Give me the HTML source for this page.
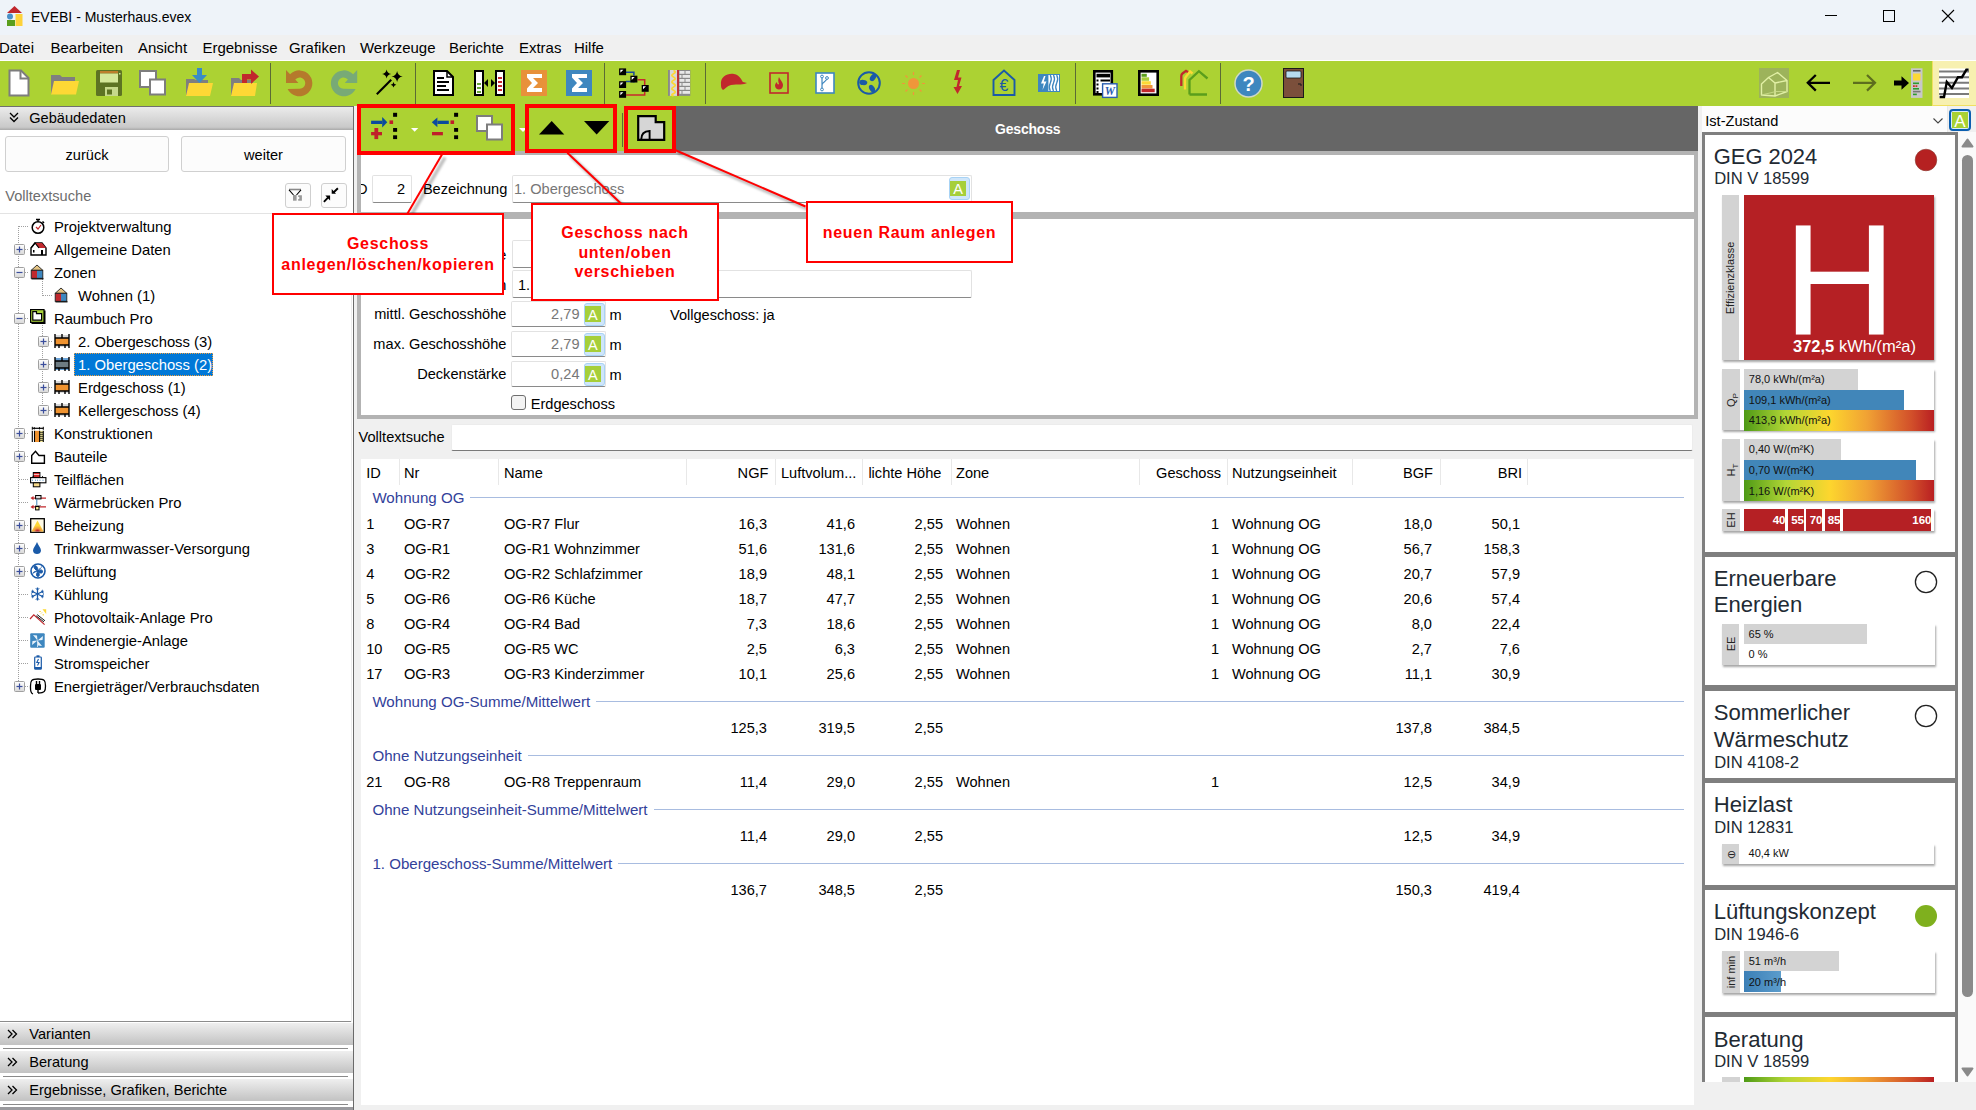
<!DOCTYPE html><html><head><meta charset="utf-8"><style>
*{box-sizing:border-box;margin:0;padding:0}
html,body{width:1976px;height:1110px;overflow:hidden;background:#f0f0f0;font-family:"Liberation Sans",sans-serif;color:#000}
.a{position:absolute}
.t{position:absolute;white-space:nowrap;font-size:14.6px;line-height:18px}
svg{position:absolute;overflow:visible}
</style></head><body><div class="a" style="left:0px;top:0px;width:1976px;height:35px;background:#eef3f9;"></div>
<svg style="left:7px;top:6px;" width="16" height="20" viewBox="0 0 16 20"><path d="M0,7 L7.5,0 L15,7 Z" fill="#c0262c"/><circle cx="3" cy="10.5" r="3" fill="#4a90c8"/><rect x="0" y="14" width="8" height="6" fill="#5a9e1c"/><rect x="8.5" y="8" width="7" height="12" fill="#fdd23a"/></svg>
<div class="t" style="left:31.02px;top:10.15px;font-size:14px;line-height:14px;color:#000;">EVEBI - Musterhaus.evex</div>
<div class="a" style="left:1825px;top:15px;width:12px;height:1px;background:#000;"></div>
<svg style="left:1883px;top:10px;" width="12" height="12" viewBox="0 0 12 12"><rect x="0.5" y="0.5" width="11" height="11" fill="none" stroke="#000" stroke-width="1"/></svg>
<svg style="left:1942px;top:10px;" width="12" height="12" viewBox="0 0 12 12"><path d="M0,0 L12,12 M12,0 L0,12" stroke="#000" stroke-width="1.1"/></svg>
<div class="a" style="left:0px;top:35px;width:1976px;height:25px;background:#f0f0f0;"></div>
<div class="a" style="left:0px;top:60px;width:1976px;height:1px;background:#ffffff;"></div>
<div class="t" style="left:-1.05px;top:40.30px;font-size:15px;line-height:15px;color:#000;">Datei</div>
<div class="t" style="left:50.45px;top:40.30px;font-size:15px;line-height:15px;color:#000;">Bearbeiten</div>
<div class="t" style="left:137.95px;top:40.30px;font-size:15px;line-height:15px;color:#000;">Ansicht</div>
<div class="t" style="left:202.45px;top:40.30px;font-size:15px;line-height:15px;color:#000;">Ergebnisse</div>
<div class="t" style="left:288.95px;top:40.30px;font-size:15px;line-height:15px;color:#000;">Grafiken</div>
<div class="t" style="left:359.95px;top:40.30px;font-size:15px;line-height:15px;color:#000;">Werkzeuge</div>
<div class="t" style="left:448.95px;top:40.30px;font-size:15px;line-height:15px;color:#000;">Berichte</div>
<div class="t" style="left:518.95px;top:40.30px;font-size:15px;line-height:15px;color:#000;">Extras</div>
<div class="t" style="left:573.95px;top:40.30px;font-size:15px;line-height:15px;color:#000;">Hilfe</div>
<div class="a" style="left:0px;top:61px;width:1976px;height:45px;background:#acd233;"></div>
<div class="a" style="left:1932px;top:61px;width:44px;height:45px;background:#f7f0b0;border-left:1px solid #f0e060;border-bottom:1px solid #f0e060;"></div>
<div class="a" style="left:270px;top:63px;width:1px;height:41px;background:#5b6b35;"></div>
<div class="a" style="left:415px;top:63px;width:1px;height:41px;background:#5b6b35;"></div>
<div class="a" style="left:604px;top:63px;width:1px;height:41px;background:#5b6b35;"></div>
<div class="a" style="left:705px;top:63px;width:1px;height:41px;background:#5b6b35;"></div>
<div class="a" style="left:1075px;top:63px;width:1px;height:41px;background:#5b6b35;"></div>
<div class="a" style="left:1220px;top:63px;width:1px;height:41px;background:#5b6b35;"></div>
<svg style="left:8px;top:69px;" width="22" height="28" viewBox="0 0 22 28"><path d="M1.5,1.5 H13 L20.5,9 V26.5 H1.5 Z" fill="#fff" stroke="#7d7d7d" stroke-width="2"/><path d="M12.5,1.5 V9.5 H20.5" fill="none" stroke="#7d7d7d" stroke-width="2"/></svg>
<svg style="left:51px;top:74px;" width="28" height="22" viewBox="0 0 28 22"><path d="M0,1 H9 L11,3 H24 V20 H0 Z" fill="#7f7f7f"/><path d="M3,7 H28 L25,20.5 H0 Z" fill="#fdd835"/></svg>
<svg style="left:96px;top:70px;" width="26" height="26" viewBox="0 0 26 26"><rect x="0" y="0" width="26" height="26" rx="1.5" fill="#5d7323"/><rect x="4" y="1" width="18" height="2.5" fill="#bd7f2c"/><rect x="4" y="3.5" width="18" height="9" fill="#d5e89a"/><rect x="9" y="17" width="13" height="9" fill="#c6d98b"/><rect x="11" y="19.5" width="5" height="5" fill="#5d7323"/><rect x="23" y="3" width="1.5" height="1.5" fill="#d5e89a"/></svg>
<svg style="left:139px;top:70px;" width="27" height="26" viewBox="0 0 27 26"><rect x="1" y="1" width="16" height="16" fill="#fff" stroke="#7d7d7d" stroke-width="2"/><rect x="11" y="9.5" width="15" height="15" fill="#fff" stroke="#7d7d7d" stroke-width="2"/></svg>
<svg style="left:186px;top:68px;" width="27" height="28" viewBox="0 0 27 28"><path d="M0,11 H8 L10,12 H22 V27 H0 Z" fill="#7f7f7f"/><path d="M3,15 H27 L24,28 H0 Z" fill="#fdd835"/><rect x="11" y="0" width="5" height="8" fill="#3a8bc6"/><path d="M6,7 H21 L13.5,15 Z" fill="#3a8bc6"/></svg>
<svg style="left:231px;top:68px;" width="29" height="28" viewBox="0 0 29 28"><path d="M0,10 H8 L10,12 H22 V27 H0 Z" fill="#7f7f7f"/><path d="M3,15 H26 L24,28 H0 Z" fill="#fdd835"/><path d="M11,6 H20 V1.5 L28,8.5 L20,16 V11.5 H16 V15 H11 Z" fill="#c1282d"/></svg>
<svg style="left:286px;top:70px;" width="27" height="27" viewBox="0 0 27 27"><path d="M1.6,19 A13,13 0 1 0 4.1,4.2 L0,0 L0,13 L12.4,13 L9.3,9.6 A5.6,5.6 0 1 1 13.1,18.7 Z" fill="#b57a2c"/></svg>
<svg style="left:331px;top:70px;" width="27" height="27" viewBox="0 0 27 27"><path d="M1.6,19 A13,13 0 1 0 4.1,4.2 L0,0 L0,13 L12.4,13 L9.3,9.6 A5.6,5.6 0 1 1 13.1,18.7 Z" fill="#78aa76" transform="translate(26.2,0) scale(-1,1)"/></svg>
<svg style="left:376px;top:69px;" width="28" height="28" viewBox="0 0 28 28"><path d="M0.8,25.3 L15.2,10.8" stroke="#000" stroke-width="2.1"/><path d="M10.6,0.40000000000000036 Q11.184999999999999,4.315 15.1,4.9 Q11.184999999999999,5.485 10.6,9.4 Q10.015,5.485 6.1,4.9 Q10.015,4.315 10.6,0.40000000000000036 Z" fill="#000"/><path d="M21.1,1.9000000000000004 Q21.828000000000003,6.772 26.700000000000003,7.5 Q21.828000000000003,8.228 21.1,13.1 Q20.372,8.228 15.500000000000002,7.5 Q20.372,6.772 21.1,1.9000000000000004 Z" fill="#000"/><path d="M17.5,12.899999999999999 Q17.864,15.335999999999999 20.3,15.7 Q17.864,16.064 17.5,18.5 Q17.136,16.064 14.7,15.7 Q17.136,15.335999999999999 17.5,12.899999999999999 Z" fill="#000"/></svg>
<svg style="left:433px;top:70px;" width="21" height="26" viewBox="0 0 21 26"><path d="M1,1 H14 L20,7 V25 H1 Z" fill="#fff" stroke="#000" stroke-width="2"/><path d="M14,1 V7 H20" fill="none" stroke="#000" stroke-width="1.5"/><path d="M4,8 H11 M4,12 H16 M4,16 H13 M4,20 H16" stroke="#000" stroke-width="2"/></svg>
<svg style="left:474px;top:70px;" width="31" height="26" viewBox="0 0 31 26"><rect x="1" y="1" width="8" height="24" fill="#fff" stroke="#000" stroke-width="2"/><path d="M3,14 h4 M3,18 h4 M3,22 h4" stroke="#6aa83a" stroke-width="2"/><rect x="22" y="1" width="8" height="24" fill="#fff" stroke="#000" stroke-width="2"/><path d="M24,8 h4 M24,12 h4 M24,16 h4 M24,20 h4" stroke="#c8282e" stroke-width="2"/><path d="M10,13 L14,9 V17 Z M21,13 L17,9 V17 Z" fill="#000"/></svg>
<svg style="left:521px;top:70px;" width="26" height="26" viewBox="0 0 26 26"><rect width="26" height="26" fill="#e8913a"/><path d="M6,4 H21 V8 H12 L17,13 L12,18 H21 V22 H6 V18.5 L11,13 L6,7.5 Z" fill="#fff"/></svg>
<svg style="left:566px;top:70px;" width="26" height="26" viewBox="0 0 26 26"><rect width="26" height="26" fill="#3e87bf"/><path d="M6,4 H21 V8 H12 L17,13 L12,18 H21 V22 H6 V18.5 L11,13 L6,7.5 Z" fill="#fff"/></svg>
<svg style="left:619px;top:68px;" width="31" height="31" viewBox="0 0 31 31"><path d="M7,4.2 H14.9 V7.6 M7,13.5 H14.9 V14.6" fill="none" stroke="#1a4aa0" stroke-width="1.5"/><path d="M18.7,11.7 H25.7 V17 M7.1,26.9 H25.7 V24" fill="none" stroke="#c8282e" stroke-width="1.5"/><rect x="0.1" y="0.4" width="7" height="6.8" fill="#000"/><path d="M1.4000000000000001,1.7000000000000002 H4.3999999999999995 L1.4000000000000001,4.7 Z" fill="#fff"/><rect x="11.4" y="7.7" width="7" height="6.8" fill="#000"/><path d="M12.700000000000001,9.0 H15.7 L12.700000000000001,12.0 Z" fill="#fff"/><rect x="0.1" y="13.2" width="7" height="6.8" fill="#000"/><path d="M1.4000000000000001,14.5 H4.3999999999999995 L1.4000000000000001,17.5 Z" fill="#fff"/><rect x="22.7" y="17" width="7" height="6.8" fill="#000"/><path d="M24.0,18.3 H27.0 L24.0,21.3 Z" fill="#fff"/><rect x="0.1" y="23" width="7" height="6.8" fill="#000"/><path d="M1.4,24.3 H4.4 L1.4,27.3 Z" fill="#fff"/></svg>
<svg style="left:668px;top:69.8px;" width="23" height="26" viewBox="0 0 23 26"><rect x="0" y="0" width="22.3" height="25.9" fill="#8a8a8a"/><rect x="1.9" y="0" width="7.4" height="25.9" fill="#d9d9d9"/><path d="M5.5,0.5 Q9,2 5.5,3.7 Q2.2,5.3 5.5,7 Q9,8.6 5.5,10.3 Q2.2,12 5.5,13.6 Q9,15.3 5.5,17 Q2.2,18.6 5.5,20.3 Q9,22 5.5,23.6 Q2.2,25 5.5,25.9" fill="none" stroke="#fdd835" stroke-width="1.8"/><rect x="9.1" y="0" width="1.8" height="25.9" fill="#c1282d"/><g fill="#e8e8e8"><rect x="11.5" y="1" width="5" height="2.8"/><rect x="17.5" y="1" width="4.5" height="2.8"/><rect x="11.5" y="5" width="2" height="2.8"/><rect x="14.5" y="5" width="7.5" height="2.8"/><rect x="11.5" y="9" width="5" height="2.8"/><rect x="17.5" y="9" width="4.5" height="2.8"/><rect x="11.5" y="13" width="2" height="2.8"/><rect x="14.5" y="13" width="7.5" height="2.8"/><rect x="11.5" y="17" width="5" height="2.8"/><rect x="17.5" y="17" width="4.5" height="2.8"/><rect x="11.5" y="21" width="2" height="2.8"/><rect x="14.5" y="21" width="7.5" height="2.8"/></g></svg>
<svg style="left:720px;top:73px;" width="27" height="18" viewBox="0 0 27 18"><path d="M1,12 C0,3 8,0 14,1 C20,2 22,8 23,9 L27,10 C24,12 18,11 11,12 C7,13 5,16 3,17 C1.5,16 1,14 1,12 Z" fill="#c1282d"/></svg>
<svg style="left:769px;top:72px;" width="20" height="22" viewBox="0 0 20 22"><rect x="1" y="1" width="18" height="20" fill="none" stroke="#c1282d" stroke-width="1.6"/><path d="M10,5 C11,8 14,10 14,13 C14,16 12,17.5 10,17.5 C8,17.5 6,16 6,13.5 C6,12 7,11 8,10 C8,12 9,13 10,12 C9,10 9,7 10,5 Z" fill="#c1282d"/></svg>
<svg style="left:815px;top:72px;" width="20" height="22" viewBox="0 0 20 22"><rect x="1" y="1" width="18" height="20" fill="#fff" stroke="#3e87bf" stroke-width="1.6"/><path d="M7,4 V18 M7,13 C7,10 12,10 12,6" fill="none" stroke="#3e87bf" stroke-width="1.2"/><circle cx="7" cy="4.5" r="1.4" fill="#fff" stroke="#3e87bf"/><circle cx="7" cy="17.5" r="1.4" fill="#fff" stroke="#3e87bf"/><circle cx="12" cy="6" r="1.4" fill="#fff" stroke="#3e87bf"/></svg>
<svg style="left:857px;top:71px;" width="24" height="24" viewBox="0 0 24 24"><circle cx="12" cy="12" r="10.8" fill="none" stroke="#1a5aa8" stroke-width="2"/><g fill="#1a5aa8"><ellipse cx="16" cy="6.5" rx="4" ry="2.6" transform="rotate(-55 16 6.5)"/><ellipse cx="6.3" cy="11.5" rx="4" ry="2.6" transform="rotate(5 6.3 11.5)"/><ellipse cx="15" cy="17.5" rx="4" ry="2.6" transform="rotate(60 15 17.5)"/></g></svg>
<svg style="left:902px;top:72px;" width="23" height="23" viewBox="0 0 23 23"><circle cx="11.5" cy="11.5" r="5.5" fill="#f0963a"/><g stroke="#f0963a" stroke-width="1.2"><path d="M11.5,0 v3 M11.5,20 v3 M0,11.5 h3 M20,11.5 h3 M3.5,3.5 l2,2 M17.5,17.5 l2,2 M3.5,19.5 l2,-2 M17.5,5.5 l2,-2"/></g></svg>
<svg style="left:951px;top:70px;" width="14" height="25" viewBox="0 0 14 25"><path d="M6,0 L3,10 L7,10 L5.5,17 L2.5,17 L6.5,24 L11,16 L8,16 L10.5,7.5 L7,7.5 L9,0 Z" fill="#c1282d"/></svg>
<svg style="left:992px;top:69px;" width="25" height="28" viewBox="0 0 25 28"><path d="M1.5,26 V11 L12,1.5 L22.5,11 V26 Z" fill="none" stroke="#1a5aa8" stroke-width="1.9"/><text x="12" y="22.3" font-size="16" font-family="Liberation Sans" fill="#1a5aa8" text-anchor="middle">€</text></svg>
<svg style="left:1038px;top:74px;" width="23" height="18" viewBox="0 0 23 18"><rect width="22" height="18" fill="#3e87bf"/><rect x="10.4" y="1" width="10.6" height="16" fill="#fff"/><path d="M6,2 L3,9.5 H5.8 L4.5,16 L8.5,7.5 H5.8 L7.5,2 Z" fill="#fff"/><path d="M12.3,1 Q14.3,5 12.3,9 Q10.3,13 12.3,17 M15.5,1 Q17.5,5 15.5,9 Q13.5,13 15.5,17 M18.7,1 Q20.7,5 18.7,9 Q16.7,13 18.7,17" fill="none" stroke="#3e87bf" stroke-width="1.3"/></svg>
<svg style="left:1093px;top:70px;" width="25" height="28" viewBox="0 0 25 28"><rect x="1.3" y="1.3" width="17.5" height="23" fill="#fff" stroke="#000" stroke-width="2.6"/><rect x="3.5" y="3.8" width="13.5" height="3.6" fill="#000"/><path d="M3.5,10.5 h2 M7.5,10.5 h9.5 M3.5,14.5 h2 M3.5,18.5 h2 M3.5,22 h2" stroke="#000" stroke-width="2"/><rect x="9.6" y="13.8" width="14.4" height="13.6" fill="#fff" stroke="#2a5db0" stroke-width="1.4"/><text x="16.8" y="25.2" font-size="11.5" font-weight="bold" font-style="italic" font-family="Liberation Serif" fill="#2a5db0" text-anchor="middle">W</text></svg>
<svg style="left:1138px;top:70px;" width="21" height="26" viewBox="0 0 21 26"><rect x="1.3" y="1.3" width="18.4" height="23.4" fill="#fff" stroke="#000" stroke-width="2.6"/><rect x="3.5" y="3.8" width="5.3" height="3" fill="#5a9e1c"/><rect x="3.5" y="7.3" width="7.6" height="3.5" fill="#a8cd3a"/><rect x="3.5" y="11.2" width="9.3" height="3.5" fill="#fdd835"/><rect x="3.5" y="15" width="11" height="3.5" fill="#f0963a"/><rect x="3.5" y="18.7" width="13.2" height="3.5" fill="#c1282d"/></svg>
<svg style="left:1180px;top:70px;" width="30" height="27" viewBox="0 0 30 27"><path d="M1.3,16 V6 Q1.3,4.5 2.5,3.5 L6,0.8 L8.5,2.5" fill="none" stroke="#c1282d" stroke-width="2.3"/><path d="M5,19.5 V9 Q5,7.5 6.2,6.5 L10,1.5 L12.5,3.5" fill="none" stroke="#fdd835" stroke-width="2.3"/><path d="M9.5,24.5 V10 L18.9,1.2 L27.5,8.5 M9.5,24.5 H27" fill="none" stroke="#5a9e1c" stroke-width="2.3"/></svg>
<svg style="left:1234px;top:69px;" width="29" height="29" viewBox="0 0 29 29"><circle cx="14.5" cy="14.5" r="13.5" fill="#3e87bf" stroke="#cfd8c8" stroke-width="1.5"/><text x="14.5" y="21.5" font-size="20" font-weight="bold" font-family="Liberation Sans" fill="#fff" text-anchor="middle">?</text></svg>
<svg style="left:1283px;top:68px;" width="21" height="30" viewBox="0 0 21 30"><rect x="0" y="0" width="21" height="30" fill="#1a1a1a"/><rect x="1" y="1" width="19" height="28" fill="#7b4f3b"/><rect x="3" y="3" width="15" height="7" rx="1" fill="#b7dcf0" stroke="#1a1a1a" stroke-width="0.8"/><path d="M15,16 h3 v2" fill="none" stroke="#1a1a1a" stroke-width="1"/></svg>
<svg style="left:1759px;top:68px;" width="30" height="30" viewBox="0 0 30 30"><rect width="30" height="30" fill="#9db35b"/><path d="M2.5,27 V16 L9.5,9.5 L16,15 V28 Z M9.5,9.5 L18.5,4.5 L28,12.5 L16,15 M28,12.5 V23.5 L16,28" fill="none" stroke="#e2f0a6" stroke-width="1.4" stroke-linejoin="round"/><path d="M2.5,27 L17,23.5 L28,23.5" fill="none" stroke="#c9dc8a" stroke-width="0.9"/></svg>
<svg style="left:1806px;top:74px;" width="25" height="18" viewBox="0 0 25 18"><path d="M24,8.8 H2 M9.8,1 L1.8,8.8 L9.8,16.6" fill="none" stroke="#000" stroke-width="2.3"/></svg>
<svg style="left:1852px;top:74px;" width="25" height="18" viewBox="0 0 25 18"><path d="M1,8.8 H23 M15,1 L23,8.8 L15,16.6" fill="none" stroke="#5d6e1e" stroke-width="2.2"/></svg>
<svg style="left:1894px;top:68px;" width="30" height="30" viewBox="0 0 30 30"><path d="M0,12.6 H7.5 V8.3 L15,15 L7.5,21.7 V17.4 H0 Z" fill="#000"/><rect x="17" y="0.3" width="11.5" height="29.6" fill="#c8c8c8"/><rect x="19" y="2" width="7.5" height="1.6" fill="#666"/><rect x="19" y="5.5" width="7.5" height="7" fill="#fdd835"/><rect x="19" y="14.5" width="6" height="1.6" fill="#2e9a2e"/><rect x="19" y="17.3" width="1.8" height="1.6" fill="#d02020"/><rect x="21.5" y="17.3" width="1.8" height="1.6" fill="#d02020"/><rect x="19" y="20" width="6" height="1.6" fill="#2e9a2e"/><rect x="19" y="22.8" width="7.5" height="1.6" fill="#777"/><rect x="19" y="25.6" width="3.8" height="1.6" fill="#2e9a2e"/></svg>
<svg style="left:1939px;top:68px;" width="31" height="30" viewBox="0 0 31 30"><rect x="0" y="0.5" width="30" height="29.5" fill="#fff"/><path d="M0,3.6 H30 M0,9.2 H30 M0,14.8 H30 M0,20.4 H30 M0,26 H30" stroke="#7a7a7a" stroke-width="2"/><path d="M0.6,29 H5 L7.8,13.9 L12.9,20 L19,9.2 H23 L27.4,1.6 H29.6" fill="none" stroke="#000" stroke-width="2.4"/></svg>
<svg width="0" height="0" style="position:absolute"><defs><linearGradient id="eg" x1="0" y1="0" x2="0" y2="1"><stop offset="0" stop-color="#fff"/><stop offset="1" stop-color="#d8d8d8"/></linearGradient></defs></svg>
<div class="a" style="left:0px;top:106px;width:354px;height:1004px;background:#fff;"></div>
<div class="a" style="left:0px;top:106px;width:353px;height:24px;background:linear-gradient(#ededed,#c9c9c9 88%,#a9a9a9);"></div>
<div class="a" style="left:0px;top:106px;width:353px;height:1px;background:#707070;"></div>
<svg style="left:9px;top:112px;" width="10" height="11" viewBox="0 0 10 11"><path d="M1,1 L5,5 L9,1 M1,5.5 L5,9.5 L9,5.5" fill="none" stroke="#000" stroke-width="1.3"/></svg>
<div class="t" style="left:29.28px;top:110.84px;font-size:14.6px;line-height:14.6px;color:#000;">Gebäudedaten</div>
<div class="a" style="left:5px;top:136px;width:164px;height:36px;background:#fcfcfc;border:1px solid #d0d0d0;border-radius:3px;"></div>
<div class="a" style="left:181px;top:136px;width:165px;height:36px;background:#fcfcfc;border:1px solid #d0d0d0;border-radius:3px;"></div>
<div class="t" style="left:7.0px;width:160px;text-align:center;top:147.64px;font-size:14.6px;line-height:14.6px;color:#000;">zurück</div>
<div class="t" style="left:183.5px;width:160px;text-align:center;top:147.64px;font-size:14.6px;line-height:14.6px;color:#000;">weiter</div>
<div class="t" style="left:5.28px;top:188.64px;font-size:14.6px;line-height:14.6px;color:#6d6d6d;">Volltextsuche</div>
<div class="a" style="left:285px;top:183px;width:25.5px;height:25px;background:#fcfcfc;border:1px solid #cfcfcf;border-radius:3px;"></div>
<div class="a" style="left:321px;top:183px;width:25.5px;height:25px;background:#fcfcfc;border:1px solid #cfcfcf;border-radius:3px;"></div>
<svg style="left:288px;top:188px;" width="15" height="14" viewBox="0 0 15 14"><path d="M1,1.5 H13" stroke="#8a8a8a" stroke-width="1.6"/><path d="M1,1.8 L5.5,7 M13,1.8 L8.5,7" stroke="#000" stroke-width="1.1"/><rect x="5" y="7" width="3.6" height="5.7" fill="#9a9a9a"/><path d="M10.2,7.3 H13.9 V12.7 H10.2 V11 H11.3 V9 H10.2 Z" fill="#9a9a9a"/></svg>
<svg style="left:323px;top:187px;" width="16" height="16" viewBox="0 0 16 16"><path d="M0.9,14.9 L5.7,9.9 M14.9,1.2 L10.5,5.5" stroke="#000" stroke-width="1.9"/><path d="M2.3,8.5 H7.1 V13.5 Z M8.7,2.1 V6.7 H13 Z" fill="#000"/></svg>
<div class="a" style="left:0px;top:213px;width:352px;height:1px;background:#e3e3e3;"></div>
<div class="a" style="left:0px;top:1021px;width:351px;height:1px;background:#8c8c8c;"></div>
<div class="a" style="left:351px;top:213px;width:1px;height:809px;background:#ececec;"></div>
<div class="a" style="left:18px;top:226px;width:1px;height:461px;background:transparent;background-image:linear-gradient(#a0a0a0 50%,transparent 50%);background-size:1px 2px;"></div>
<div class="a" style="left:42px;top:279px;width:1px;height:17px;background:transparent;background-image:linear-gradient(#a0a0a0 50%,transparent 50%);background-size:1px 2px;"></div>
<div class="a" style="left:42px;top:325px;width:1px;height:86px;background:transparent;background-image:linear-gradient(#a0a0a0 50%,transparent 50%);background-size:1px 2px;"></div>
<div class="a" style="left:19px;top:226px;width:10px;height:1px;background:transparent;background-image:linear-gradient(90deg,#a0a0a0 50%,transparent 50%);background-size:2px 1px;"></div>
<svg style="left:30px;top:218px;" width="16" height="16" viewBox="0 0 16 16"><circle cx="8" cy="9.5" r="5.8" fill="#fff" stroke="#000" stroke-width="1.5"/><path d="M6,1.5 H10 M8,1.5 V3.5 M12.5,3.5 L14,5" stroke="#000" stroke-width="1.5"/><path d="M6,9 L8,11 L11,7" fill="none" stroke="#c1282d" stroke-width="1.2"/></svg>
<div class="t" style="left:53.96px;top:219.97px;font-size:14.8px;line-height:14.8px;color:#000;">Projektverwaltung</div>
<div class="a" style="left:19px;top:249px;width:10px;height:1px;background:transparent;background-image:linear-gradient(90deg,#a0a0a0 50%,transparent 50%);background-size:2px 1px;"></div>
<svg style="left:14px;top:243.5px;" width="11" height="11" viewBox="0 0 11 11"><rect x="0.5" y="0.5" width="10" height="10" rx="1" fill="url(#eg)" stroke="#a0a0a0"/><path d="M2.5,5.5 H8.5" stroke="#3b4e9c" stroke-width="1.2"/><path d="M5.5,2.5 V8.5" stroke="#3b4e9c" stroke-width="1.2"/></svg>
<svg style="left:30px;top:241px;" width="17" height="15" viewBox="0 0 17 15"><path d="M1,14 V7 L5,2 H12 L16,7 V14 Z" fill="#fff" stroke="#000" stroke-width="1.4"/><path d="M5,2 H12 L16,7 H9 Z" fill="#c1282d"/><path d="M1,7 L5,2 L9,7" fill="none" stroke="#000" stroke-width="1.2"/><rect x="3" y="9" width="1.5" height="2.5" fill="#000"/><rect x="11" y="9" width="2" height="5" fill="#000"/></svg>
<div class="t" style="left:53.96px;top:242.97px;font-size:14.8px;line-height:14.8px;color:#000;">Allgemeine Daten</div>
<div class="a" style="left:19px;top:272px;width:10px;height:1px;background:transparent;background-image:linear-gradient(90deg,#a0a0a0 50%,transparent 50%);background-size:2px 1px;"></div>
<svg style="left:14px;top:266.5px;" width="11" height="11" viewBox="0 0 11 11"><rect x="0.5" y="0.5" width="10" height="10" rx="1" fill="url(#eg)" stroke="#a0a0a0"/><path d="M2.5,5.5 H8.5" stroke="#3b4e9c" stroke-width="1.2"/></svg>
<svg style="left:30px;top:264px;" width="15" height="16" viewBox="0 0 15 16"><path d="M1.2,6.3 L7,1 L12.8,6.3 Z" fill="#e3c383" stroke="#222" stroke-width="0.9" stroke-linejoin="round"/><rect x="1.2" y="6.3" width="5.8" height="8" fill="#c1282d"/><rect x="7" y="6.3" width="5.8" height="8" fill="#3e87bf"/><rect x="1.2" y="6.3" width="11.6" height="8" fill="none" stroke="#222" stroke-width="0.9"/><path d="M1.5,14.8 H13.5" stroke="#111" stroke-width="1.3"/></svg>
<div class="t" style="left:53.96px;top:265.97px;font-size:14.8px;line-height:14.8px;color:#000;">Zonen</div>
<div class="a" style="left:43px;top:295px;width:10px;height:1px;background:transparent;background-image:linear-gradient(90deg,#a0a0a0 50%,transparent 50%);background-size:2px 1px;"></div>
<svg style="left:54px;top:287px;" width="15" height="16" viewBox="0 0 15 16"><path d="M1.2,6.3 L7,1 L12.8,6.3 Z" fill="#e3c383" stroke="#222" stroke-width="0.9" stroke-linejoin="round"/><rect x="1.2" y="6.3" width="5.8" height="8" fill="#c1282d"/><rect x="7" y="6.3" width="5.8" height="8" fill="#3e87bf"/><rect x="1.2" y="6.3" width="11.6" height="8" fill="none" stroke="#222" stroke-width="0.9"/><path d="M1.5,14.8 H13.5" stroke="#111" stroke-width="1.3"/></svg>
<div class="t" style="left:78.06px;top:288.97px;font-size:14.8px;line-height:14.8px;color:#000;">Wohnen (1)</div>
<div class="a" style="left:19px;top:318px;width:10px;height:1px;background:transparent;background-image:linear-gradient(90deg,#a0a0a0 50%,transparent 50%);background-size:2px 1px;"></div>
<svg style="left:14px;top:312.5px;" width="11" height="11" viewBox="0 0 11 11"><rect x="0.5" y="0.5" width="10" height="10" rx="1" fill="url(#eg)" stroke="#a0a0a0"/><path d="M2.5,5.5 H8.5" stroke="#3b4e9c" stroke-width="1.2"/></svg>
<svg style="left:30px;top:309px;" width="16" height="16" viewBox="0 0 16 16"><rect x="1.5" y="1.5" width="14" height="13.5" fill="#000"/><rect x="0.6" y="0.6" width="13.4" height="12.8" fill="#a8d13a" stroke="#000" stroke-width="1.2"/><path d="M2.8,2.6 H6.5 V4.6 H11.6 V11.2 H2.8 Z" fill="#fff" stroke="#000" stroke-width="1.2"/></svg>
<div class="t" style="left:53.96px;top:311.97px;font-size:14.8px;line-height:14.8px;color:#000;">Raumbuch Pro</div>
<div class="a" style="left:43px;top:341px;width:10px;height:1px;background:transparent;background-image:linear-gradient(90deg,#a0a0a0 50%,transparent 50%);background-size:2px 1px;"></div>
<svg style="left:38px;top:335.5px;" width="11" height="11" viewBox="0 0 11 11"><rect x="0.5" y="0.5" width="10" height="10" rx="1" fill="url(#eg)" stroke="#a0a0a0"/><path d="M2.5,5.5 H8.5" stroke="#3b4e9c" stroke-width="1.2"/><path d="M5.5,2.5 V8.5" stroke="#3b4e9c" stroke-width="1.2"/></svg>
<svg style="left:54px;top:334px;" width="16" height="15" viewBox="0 0 16 15"><rect x="1" y="1" width="14" height="12" fill="#d9d9d9"/><rect x="1" y="4" width="14" height="7" fill="#ef9330"/><path d="M1,0 V14 M15,0 V14 M8,0 V4 M1,4 H15 M1,11 H15 M5,11 V14 M11,11 V14" stroke="#000" stroke-width="1.4"/></svg>
<div class="t" style="left:78.06px;top:334.97px;font-size:14.8px;line-height:14.8px;color:#000;">2. Obergeschoss (3)</div>
<div class="a" style="left:43px;top:364px;width:10px;height:1px;background:transparent;background-image:linear-gradient(90deg,#a0a0a0 50%,transparent 50%);background-size:2px 1px;"></div>
<svg style="left:38px;top:358.5px;" width="11" height="11" viewBox="0 0 11 11"><rect x="0.5" y="0.5" width="10" height="10" rx="1" fill="url(#eg)" stroke="#a0a0a0"/><path d="M2.5,5.5 H8.5" stroke="#3b4e9c" stroke-width="1.2"/><path d="M5.5,2.5 V8.5" stroke="#3b4e9c" stroke-width="1.2"/></svg>
<svg style="left:54px;top:357px;" width="16" height="15" viewBox="0 0 16 15"><rect x="1" y="1" width="14" height="12" fill="#6aa3d8"/><rect x="1" y="4" width="14" height="7" fill="#6d7b82"/><path d="M1,0 V14 M15,0 V14 M8,0 V4 M1,4 H15 M1,11 H15 M5,11 V14 M11,11 V14" stroke="#000" stroke-width="1.4"/></svg>
<div class="a" style="left:73.5px;top:353px;width:139px;height:23px;background:#0078d7;outline:1px dotted #f0a040;outline-offset:-1px;"></div>
<div class="t" style="left:78.06px;top:357.97px;font-size:14.8px;line-height:14.8px;color:#fff;">1. Obergeschoss (2)</div>
<div class="a" style="left:43px;top:387px;width:10px;height:1px;background:transparent;background-image:linear-gradient(90deg,#a0a0a0 50%,transparent 50%);background-size:2px 1px;"></div>
<svg style="left:38px;top:381.5px;" width="11" height="11" viewBox="0 0 11 11"><rect x="0.5" y="0.5" width="10" height="10" rx="1" fill="url(#eg)" stroke="#a0a0a0"/><path d="M2.5,5.5 H8.5" stroke="#3b4e9c" stroke-width="1.2"/><path d="M5.5,2.5 V8.5" stroke="#3b4e9c" stroke-width="1.2"/></svg>
<svg style="left:54px;top:380px;" width="16" height="15" viewBox="0 0 16 15"><rect x="1" y="1" width="14" height="12" fill="#d9d9d9"/><rect x="1" y="4" width="14" height="7" fill="#ef9330"/><path d="M1,0 V14 M15,0 V14 M8,0 V4 M1,4 H15 M1,11 H15 M5,11 V14 M11,11 V14" stroke="#000" stroke-width="1.4"/></svg>
<div class="t" style="left:78.06px;top:380.97px;font-size:14.8px;line-height:14.8px;color:#000;">Erdgeschoss (1)</div>
<div class="a" style="left:43px;top:410px;width:10px;height:1px;background:transparent;background-image:linear-gradient(90deg,#a0a0a0 50%,transparent 50%);background-size:2px 1px;"></div>
<svg style="left:38px;top:404.5px;" width="11" height="11" viewBox="0 0 11 11"><rect x="0.5" y="0.5" width="10" height="10" rx="1" fill="url(#eg)" stroke="#a0a0a0"/><path d="M2.5,5.5 H8.5" stroke="#3b4e9c" stroke-width="1.2"/><path d="M5.5,2.5 V8.5" stroke="#3b4e9c" stroke-width="1.2"/></svg>
<svg style="left:54px;top:403px;" width="16" height="15" viewBox="0 0 16 15"><rect x="1" y="1" width="14" height="12" fill="#d9d9d9"/><rect x="1" y="4" width="14" height="7" fill="#ef9330"/><path d="M1,0 V14 M15,0 V14 M8,0 V4 M1,4 H15 M1,11 H15 M5,11 V14 M11,11 V14" stroke="#000" stroke-width="1.4"/></svg>
<div class="t" style="left:78.06px;top:403.97px;font-size:14.8px;line-height:14.8px;color:#000;">Kellergeschoss (4)</div>
<div class="a" style="left:19px;top:433px;width:10px;height:1px;background:transparent;background-image:linear-gradient(90deg,#a0a0a0 50%,transparent 50%);background-size:2px 1px;"></div>
<svg style="left:14px;top:427.5px;" width="11" height="11" viewBox="0 0 11 11"><rect x="0.5" y="0.5" width="10" height="10" rx="1" fill="url(#eg)" stroke="#a0a0a0"/><path d="M2.5,5.5 H8.5" stroke="#3b4e9c" stroke-width="1.2"/><path d="M5.5,2.5 V8.5" stroke="#3b4e9c" stroke-width="1.2"/></svg>
<svg style="left:30px;top:426px;" width="16" height="17" viewBox="0 0 16 17"><path d="M2.3,2.3 H13.3" stroke="#000" stroke-width="1.2"/><path d="M2.3,0.8 V3.8 M4.3,1.2 V3.4 M9.5,1.2 V3.4 M13.3,0.8 V3.8" stroke="#000" stroke-width="1"/><rect x="5" y="4.8" width="4.3" height="11.2" fill="#ef9330"/><rect x="10" y="4.8" width="3.3" height="11.2" fill="#fff3a0"/><path d="M2.3,4.8 V16 M4.5,4.8 V16 M9.6,4.8 V16 M13.3,4.8 V16" stroke="#000" stroke-width="1.1"/><path d="M10,6.3 H13 M10,8.3 H13 M10,10.3 H13 M10,12.3 H13 M10,14.3 H13" stroke="#000" stroke-width="0.8"/></svg>
<div class="t" style="left:53.96px;top:426.97px;font-size:14.8px;line-height:14.8px;color:#000;">Konstruktionen</div>
<div class="a" style="left:19px;top:456px;width:10px;height:1px;background:transparent;background-image:linear-gradient(90deg,#a0a0a0 50%,transparent 50%);background-size:2px 1px;"></div>
<svg style="left:14px;top:450.5px;" width="11" height="11" viewBox="0 0 11 11"><rect x="0.5" y="0.5" width="10" height="10" rx="1" fill="url(#eg)" stroke="#a0a0a0"/><path d="M2.5,5.5 H8.5" stroke="#3b4e9c" stroke-width="1.2"/><path d="M5.5,2.5 V8.5" stroke="#3b4e9c" stroke-width="1.2"/></svg>
<svg style="left:30px;top:448px;" width="16" height="17" viewBox="0 0 16 17"><path d="M1.7,7.5 L5.5,3.3 L9,7.5 H14.4 V15.3 H1.7 Z" fill="#fff" stroke="#000" stroke-width="1.4" stroke-linejoin="miter"/></svg>
<div class="t" style="left:53.96px;top:449.97px;font-size:14.8px;line-height:14.8px;color:#000;">Bauteile</div>
<div class="a" style="left:19px;top:479px;width:10px;height:1px;background:transparent;background-image:linear-gradient(90deg,#a0a0a0 50%,transparent 50%);background-size:2px 1px;"></div>
<svg style="left:30px;top:471.5px;" width="17" height="16" viewBox="0 0 17 16"><rect x="3.3" y="0.5" width="6.6" height="5.5" fill="#d42a2a" stroke="#000" stroke-width="1"/><path d="M3.8,2.5 H9.4" stroke="#fff" stroke-width="0.7"/><rect x="0.6" y="5.6" width="15.3" height="5.2" fill="#fff" stroke="#000" stroke-width="1.1"/><path d="M2,8.2 h1 M5,8.2 h1 M7,8.2 h1 M9.5,8.2 h1 M12.5,8.2 h1" stroke="#3e87bf" stroke-width="1"/><path d="M2,5.6 L3,3.8 L4,5.6 M11.5,5.6 L12.5,3.8 L13.5,5.6" fill="#000"/><rect x="3.3" y="10.8" width="6.6" height="4" fill="#f5d98a" stroke="#000" stroke-width="1"/></svg>
<div class="t" style="left:53.96px;top:472.97px;font-size:14.8px;line-height:14.8px;color:#000;">Teilflächen</div>
<div class="a" style="left:19px;top:502px;width:10px;height:1px;background:transparent;background-image:linear-gradient(90deg,#a0a0a0 50%,transparent 50%);background-size:2px 1px;"></div>
<svg style="left:30px;top:494.5px;" width="17" height="17" viewBox="0 0 17 17"><path d="M3,3.1 H16 M3,11.9 H16" stroke="#c1282d" stroke-width="1.2"/><path d="M0.5,3.1 L3.5,1 V5.2 Z M0.5,11.9 L3.5,9.8 V14 Z" fill="#c1282d"/><rect x="5.6" y="0.5" width="5.4" height="3.4" fill="#ddd" stroke="#000" stroke-width="1"/><path d="M6.8,3.9 V10.5" stroke="#3e87bf" stroke-width="1"/><path d="M5,10.5 H11" stroke="#888" stroke-width="0.8"/><rect x="5.6" y="11.5" width="3.4" height="3.4" fill="#fff3a0" stroke="#000" stroke-width="1"/></svg>
<div class="t" style="left:53.96px;top:495.97px;font-size:14.8px;line-height:14.8px;color:#000;">Wärmebrücken Pro</div>
<div class="a" style="left:19px;top:525px;width:10px;height:1px;background:transparent;background-image:linear-gradient(90deg,#a0a0a0 50%,transparent 50%);background-size:2px 1px;"></div>
<svg style="left:14px;top:519.5px;" width="11" height="11" viewBox="0 0 11 11"><rect x="0.5" y="0.5" width="10" height="10" rx="1" fill="url(#eg)" stroke="#a0a0a0"/><path d="M2.5,5.5 H8.5" stroke="#3b4e9c" stroke-width="1.2"/><path d="M5.5,2.5 V8.5" stroke="#3b4e9c" stroke-width="1.2"/></svg>
<svg style="left:30px;top:518px;" width="15" height="15" viewBox="0 0 15 15"><defs><radialGradient id="hz" cx="0.5" cy="1" r="0.9"><stop offset="0.1" stop-color="#c1282d"/><stop offset="0.3" stop-color="#f0963a"/><stop offset="0.6" stop-color="#fdd835"/><stop offset="1" stop-color="#fdd835"/></radialGradient></defs><rect x="0.7" y="0.7" width="13.6" height="13.6" fill="#fffbe6" stroke="#000" stroke-width="1.3"/><path d="M1.5,13.5 L7.5,2.5 L13.5,13.5 Z" fill="url(#hz)"/></svg>
<div class="t" style="left:53.96px;top:518.97px;font-size:14.8px;line-height:14.8px;color:#000;">Beheizung</div>
<div class="a" style="left:19px;top:548px;width:10px;height:1px;background:transparent;background-image:linear-gradient(90deg,#a0a0a0 50%,transparent 50%);background-size:2px 1px;"></div>
<svg style="left:14px;top:542.5px;" width="11" height="11" viewBox="0 0 11 11"><rect x="0.5" y="0.5" width="10" height="10" rx="1" fill="url(#eg)" stroke="#a0a0a0"/><path d="M2.5,5.5 H8.5" stroke="#3b4e9c" stroke-width="1.2"/><path d="M5.5,2.5 V8.5" stroke="#3b4e9c" stroke-width="1.2"/></svg>
<svg style="left:33px;top:542px;" width="8" height="12" viewBox="0 0 8 12"><path d="M4,0 C5,3 8,6 8,8.5 C8,11 6,12 4,12 C2,12 0,11 0,8.5 C0,6 3,3 4,0 Z" fill="#1a5aa8"/></svg>
<div class="t" style="left:53.96px;top:541.97px;font-size:14.8px;line-height:14.8px;color:#000;">Trinkwarmwasser-Versorgung</div>
<div class="a" style="left:19px;top:571px;width:10px;height:1px;background:transparent;background-image:linear-gradient(90deg,#a0a0a0 50%,transparent 50%);background-size:2px 1px;"></div>
<svg style="left:14px;top:565.5px;" width="11" height="11" viewBox="0 0 11 11"><rect x="0.5" y="0.5" width="10" height="10" rx="1" fill="url(#eg)" stroke="#a0a0a0"/><path d="M2.5,5.5 H8.5" stroke="#3b4e9c" stroke-width="1.2"/><path d="M5.5,2.5 V8.5" stroke="#3b4e9c" stroke-width="1.2"/></svg>
<svg style="left:30px;top:563px;" width="16" height="16" viewBox="0 0 16 16"><circle cx="8" cy="8" r="7" fill="none" stroke="#1a5aa8" stroke-width="1.6"/><path d="M8,8 C8,4 6,2 4.5,3 C3,4 5,7 8,8 Z M8,8 C11,6 13,7 12.5,9 C12,11 9,10 8,8 Z M8,8 C6,11 6,13.5 8,13.5 C10,13.5 9.5,10 8,8 Z M8,8 C5,8 3,9 3,10.5 M8,8 C10,5 12,4 12,3.5" fill="#1a5aa8" stroke="#1a5aa8" stroke-width="1"/></svg>
<div class="t" style="left:53.96px;top:564.97px;font-size:14.8px;line-height:14.8px;color:#000;">Belüftung</div>
<div class="a" style="left:19px;top:594px;width:10px;height:1px;background:transparent;background-image:linear-gradient(90deg,#a0a0a0 50%,transparent 50%);background-size:2px 1px;"></div>
<svg style="left:30px;top:587px;" width="16" height="15" viewBox="0 0 16 15"><g stroke="#1a5aa8" stroke-width="1.3" fill="none"><path d="M7.5,0.5 V13.5 M1.5,4 L13.5,10 M1.5,10 L13.5,4"/><path d="M5.8,1.2 L7.5,3 L9.2,1.2 M5.8,12.8 L7.5,11 L9.2,12.8 M1,6.3 L3.3,5.2 L2.6,2.8 M14,6.3 L11.7,5.2 L12.4,2.8 M1,7.7 L3.3,8.8 L2.6,11.2 M14,7.7 L11.7,8.8 L12.4,11.2" stroke-width="1"/></g></svg>
<div class="t" style="left:53.96px;top:587.97px;font-size:14.8px;line-height:14.8px;color:#000;">Kühlung</div>
<div class="a" style="left:19px;top:617px;width:10px;height:1px;background:transparent;background-image:linear-gradient(90deg,#a0a0a0 50%,transparent 50%);background-size:2px 1px;"></div>
<svg style="left:30px;top:609px;" width="17" height="17" viewBox="0 0 17 17"><path d="M0,10 L3.8,5.8 L14.6,15.6" fill="none" stroke="#c1282d" stroke-width="1.2"/><path d="M6.2,6.8 L14,13 M7.2,5.6 L15,11.8" stroke="#000" stroke-width="0.9"/><path d="M12.5,0.2 H16.2 V5 Z" fill="#fdd835"/><path d="M9.3,2.5 h1.5 M11,4.5 l1,-1 M13.2,6.5 v-1.5" stroke="#fdd835" stroke-width="1"/></svg>
<div class="t" style="left:53.96px;top:610.97px;font-size:14.8px;line-height:14.8px;color:#000;">Photovoltaik-Anlage Pro</div>
<div class="a" style="left:19px;top:640px;width:10px;height:1px;background:transparent;background-image:linear-gradient(90deg,#a0a0a0 50%,transparent 50%);background-size:2px 1px;"></div>
<svg style="left:30px;top:632.5px;" width="16" height="16" viewBox="0 0 16 16"><rect x="0.2" y="0.2" width="14.5" height="14.5" rx="1" fill="#3e87bf"/><g fill="#e8f2fa"><path d="M7.5,7.5 L3,2 L7,2.5 Z M7.5,7.5 L13,3 L12.5,7 Z M7.5,7.5 L12,13 L8,12.5 Z M7.5,7.5 L2,12 L2.5,8 Z"/></g><path d="M7.5,7.5 V14" stroke="#e8f2fa" stroke-width="0.8"/></svg>
<div class="t" style="left:53.96px;top:633.97px;font-size:14.8px;line-height:14.8px;color:#000;">Windenergie-Anlage</div>
<div class="a" style="left:19px;top:663px;width:10px;height:1px;background:transparent;background-image:linear-gradient(90deg,#a0a0a0 50%,transparent 50%);background-size:2px 1px;"></div>
<svg style="left:34px;top:655px;" width="8" height="16" viewBox="0 0 8 16"><rect x="0.7" y="2" width="6.6" height="12" rx="0.8" fill="#fff" stroke="#1a5aa8" stroke-width="1.2"/><rect x="2.5" y="0.3" width="3" height="1.8" fill="#1a5aa8"/><rect x="0.5" y="12" width="7" height="2.5" fill="#1a5aa8"/><path d="M4.5,4 L2.8,7.5 H5 L3.5,10.5" fill="none" stroke="#1a5aa8" stroke-width="1.1"/></svg>
<div class="t" style="left:53.96px;top:656.97px;font-size:14.8px;line-height:14.8px;color:#000;">Stromspeicher</div>
<div class="a" style="left:19px;top:686px;width:10px;height:1px;background:transparent;background-image:linear-gradient(90deg,#a0a0a0 50%,transparent 50%);background-size:2px 1px;"></div>
<svg style="left:14px;top:680.5px;" width="11" height="11" viewBox="0 0 11 11"><rect x="0.5" y="0.5" width="10" height="10" rx="1" fill="url(#eg)" stroke="#a0a0a0"/><path d="M2.5,5.5 H8.5" stroke="#3b4e9c" stroke-width="1.2"/><path d="M5.5,2.5 V8.5" stroke="#3b4e9c" stroke-width="1.2"/></svg>
<svg style="left:30px;top:678px;" width="16" height="16" viewBox="0 0 16 16"><path d="M3,16 C0,15 0.5,12 0.5,8 C0.5,3 1,1 8,1 C15,1 15.5,3 15.5,8 C15.5,13 15,15 8,15" fill="none" stroke="#000" stroke-width="1.3"/><rect x="5" y="6" width="6" height="6" rx="1" fill="#000"/><path d="M6.5,3 V6 M9.5,3 V6 M8,12 V15" stroke="#000" stroke-width="1.4"/></svg>
<div class="t" style="left:53.96px;top:679.97px;font-size:14.8px;line-height:14.8px;color:#000;">Energieträger/Verbrauchsdaten</div>
<div class="a" style="left:0px;top:1023px;width:353px;height:22px;background:linear-gradient(#efefef,#c2c2c2);"></div>
<div class="a" style="left:3px;top:1048px;width:345px;height:1px;background:#8a8a8a;"></div>
<svg style="left:7px;top:1029px;" width="11" height="10" viewBox="0 0 11 10"><path d="M1,1 L5,5 L1,9 M5.5,1 L9.5,5 L5.5,9" fill="none" stroke="#000" stroke-width="1.3"/></svg>
<div class="t" style="left:29.28px;top:1027.14px;font-size:14.6px;line-height:14.6px;color:#000;">Varianten</div>
<div class="a" style="left:0px;top:1051px;width:353px;height:22px;background:linear-gradient(#efefef,#c2c2c2);"></div>
<div class="a" style="left:3px;top:1076px;width:345px;height:1px;background:#8a8a8a;"></div>
<svg style="left:7px;top:1057px;" width="11" height="10" viewBox="0 0 11 10"><path d="M1,1 L5,5 L1,9 M5.5,1 L9.5,5 L5.5,9" fill="none" stroke="#000" stroke-width="1.3"/></svg>
<div class="t" style="left:29.28px;top:1055.14px;font-size:14.6px;line-height:14.6px;color:#000;">Beratung</div>
<div class="a" style="left:0px;top:1079px;width:353px;height:22px;background:linear-gradient(#efefef,#c2c2c2);"></div>
<div class="a" style="left:3px;top:1104px;width:345px;height:1px;background:#8a8a8a;"></div>
<svg style="left:7px;top:1085px;" width="11" height="10" viewBox="0 0 11 10"><path d="M1,1 L5,5 L1,9 M5.5,1 L9.5,5 L5.5,9" fill="none" stroke="#000" stroke-width="1.3"/></svg>
<div class="t" style="left:29.28px;top:1083.14px;font-size:14.6px;line-height:14.6px;color:#000;">Ergebnisse, Grafiken, Berichte</div>
<div class="a" style="left:0px;top:1107px;width:353px;height:3px;background:#9a9a9e;"></div>
<div class="a" style="left:353px;top:106px;width:1px;height:1004px;background:#6a6a6a;"></div>
<div class="a" style="left:357px;top:106px;width:319px;height:45px;background:#acd233;"></div>
<div class="a" style="left:676px;top:106px;width:1022px;height:45px;background:#666666;"></div>
<div class="a" style="left:622px;top:113px;width:1px;height:34px;background:#5b6b35;"></div>
<div class="t" style="left:927.7px;width:200px;text-align:center;top:122.15px;font-size:14px;line-height:14px;color:#fff;font-weight:bold;letter-spacing:-0.2px;">Geschoss</div>
<svg style="left:370px;top:112px;" width="30" height="28" viewBox="0 0 30 28"><rect x="1.1" y="8.7" width="11.1" height="3.3" fill="#0b4a9e"/><path d="M12.2,4.9 L17.3,10.35 L12.2,15.5 Z" fill="#0b4a9e"/><rect x="1.1" y="20" width="10.9" height="3.3" fill="#c0202a"/><rect x="4.4" y="16" width="3.8" height="11.1" fill="#c0202a"/><rect x="19.5" y="8.4" width="3.6" height="3.6" fill="#c0202a"/><rect x="23.1" y="0.8" width="4" height="4" fill="#000"/><rect x="23.1" y="16" width="4" height="3.8" fill="#000"/><rect x="23.1" y="23.3" width="4" height="3.8" fill="#000"/></svg>
<svg style="left:410.8px;top:128px;" width="7.3" height="3.8" viewBox="0 0 7.3 3.8"><path d="M0,0 H7.3 L3.65,3.8 Z" fill="#fff"/></svg>
<svg style="left:431px;top:112px;" width="30" height="28" viewBox="0 0 30 28"><path d="M0.8,10.35 L6.4,5.4 V15.2 Z" fill="#0b4a9e"/><rect x="6.4" y="8.7" width="11.4" height="3.3" fill="#0b4a9e"/><rect x="1" y="20" width="10.9" height="3.3" fill="#c0202a"/><rect x="19.5" y="8.4" width="3.6" height="3.6" fill="#c0202a"/><rect x="23.1" y="0.8" width="4" height="4" fill="#000"/><rect x="23.1" y="16" width="4" height="3.8" fill="#000"/><rect x="23.1" y="23.3" width="4" height="3.8" fill="#000"/></svg>
<svg style="left:476px;top:114.8px;" width="27" height="26" viewBox="0 0 27 26"><rect x="1" y="1" width="15" height="15" fill="#fff" stroke="#7d7d7d" stroke-width="2"/><rect x="11" y="9.5" width="15" height="15" fill="#fff" stroke="#7d7d7d" stroke-width="2"/></svg>
<svg style="left:519px;top:128px;" width="8" height="4" viewBox="0 0 8 4"><path d="M0,0 H8 L4,4 Z" fill="#fff"/></svg>
<svg style="left:539px;top:121px;" width="26" height="14" viewBox="0 0 26 14"><path d="M0,13.5 L12.7,0 L25.3,13.5 Z" fill="#000"/></svg>
<svg style="left:584px;top:121px;" width="26" height="14" viewBox="0 0 26 14"><path d="M0,0 L12.7,13.5 L25.3,0 Z" fill="#000"/></svg>
<svg style="left:636px;top:114px;" width="30" height="28" viewBox="0 0 30 28"><path d="M2.2,2.2 H19.7 V8.1 H28.2 V25.9 H2.2 Z" fill="#d6d6d6" stroke="#000" stroke-width="2.2"/><path d="M5.2,25.5 C5.2,20.5 8,17.2 13.6,17 V25.5" fill="none" stroke="#000" stroke-width="1.9"/></svg>
<div class="a" style="left:357px;top:151px;width:341px;height:4px;background:#b3b3b3;"></div>
<div class="a" style="left:676px;top:151px;width:1022px;height:4px;background:#b3b3b3;"></div>
<div class="a" style="left:357px;top:155px;width:4px;height:264px;background:#b3b3b3;"></div>
<div class="a" style="left:1694px;top:155px;width:4px;height:264px;background:#b3b3b3;"></div>
<div class="a" style="left:361px;top:155px;width:1333px;height:57px;background:#fff;"></div>
<div class="a" style="left:361px;top:212px;width:1333px;height:7px;background:#b3b3b3;"></div>
<div class="a" style="left:361px;top:219px;width:1333px;height:196px;background:#fff;"></div>
<div class="a" style="left:361px;top:415px;width:1333px;height:4px;background:#b3b3b3;"></div>
<div class="a" style="left:361px;top:155px;width:20px;height:57px;overflow:hidden"><div class="t" style="left:-8.02px;top:27.04px;font-size:14.6px;line-height:14.6px;color:#000;">ID</div></div>
<div class="a" style="left:371.5px;top:175px;width:40px;height:28px;background:#fff;border:1px solid #e2e2e2;border-bottom:1px solid #8a8a8a;border-radius:2px;"></div>
<div class="t" style="right:1571px;top:182.04px;font-size:14.6px;line-height:14.6px;color:#000;">2</div>
<div class="t" style="left:422.88px;top:182.04px;font-size:14.6px;line-height:14.6px;color:#000;">Bezeichnung</div>
<div class="a" style="left:511.5px;top:175px;width:460px;height:28px;background:#fff;border:1px solid #e2e2e2;border-bottom:1px solid #8a8a8a;border-radius:2px;"></div>
<div class="t" style="left:513.98px;top:182.04px;font-size:14.6px;line-height:14.6px;color:#777;">1. Obergeschoss</div>
<div class="a" style="left:949px;top:177px;width:21px;height:23.2px;background:#cfe6fa;border:1px solid #a8d3f5;border-radius:3px;"></div><div class="a" style="left:950.2px;top:180.6px;width:15.8px;height:15.2px;background:#a6cf3a;"></div><div class="t" style="left:948.1px;width:20px;text-align:center;top:181.73px;font-size:14.5px;line-height:14.5px;color:#fff;">A</div>
<div class="t" style="right:1469.6px;top:247.74px;font-size:14.6px;line-height:14.6px;color:#000;">Geschosstyp e</div>
<div class="t" style="right:1469.6px;top:277.74px;font-size:14.6px;line-height:14.6px;color:#000;">Raumbuch</div>
<div class="a" style="left:511.5px;top:240px;width:95px;height:28px;background:#fff;border:1px solid #e2e2e2;border-bottom:1px solid #8a8a8a;border-radius:2px;"></div>
<div class="a" style="left:511.5px;top:270px;width:460px;height:28px;background:#fff;border:1px solid #e2e2e2;border-bottom:1px solid #8a8a8a;border-radius:2px;"></div>
<div class="t" style="left:517.98px;top:277.74px;font-size:14.6px;line-height:14.6px;color:#000;">1.</div>
<div class="t" style="right:1469.6px;top:306.94px;font-size:14.6px;line-height:14.6px;color:#000;">mittl. Geschosshöhe</div>
<div class="a" style="left:511px;top:300.8px;width:95px;height:26.6px;background:#fff;border:1px solid #e2e2e2;border-bottom:1px solid #8a8a8a;border-radius:2px;"></div>
<div class="t" style="right:1396.5px;top:306.94px;font-size:14.6px;line-height:14.6px;color:#777;">2,79</div>
<div class="a" style="left:583.8px;top:302.8px;width:21px;height:23.2px;background:#cfe6fa;border:1px solid #a8d3f5;border-radius:3px;"></div><div class="a" style="left:585.0px;top:306.40000000000003px;width:15.8px;height:15.2px;background:#a6cf3a;"></div><div class="t" style="left:582.9px;width:20px;text-align:center;top:307.53px;font-size:14.5px;line-height:14.5px;color:#fff;">A</div>
<div class="t" style="left:609.48px;top:307.94px;font-size:14.6px;line-height:14.6px;color:#000;">m</div>
<div class="t" style="right:1469.6px;top:336.94px;font-size:14.6px;line-height:14.6px;color:#000;">max. Geschosshöhe</div>
<div class="a" style="left:511px;top:330.8px;width:95px;height:26.6px;background:#fff;border:1px solid #e2e2e2;border-bottom:1px solid #8a8a8a;border-radius:2px;"></div>
<div class="t" style="right:1396.5px;top:336.94px;font-size:14.6px;line-height:14.6px;color:#777;">2,79</div>
<div class="a" style="left:583.8px;top:332.8px;width:21px;height:23.2px;background:#cfe6fa;border:1px solid #a8d3f5;border-radius:3px;"></div><div class="a" style="left:585.0px;top:336.40000000000003px;width:15.8px;height:15.2px;background:#a6cf3a;"></div><div class="t" style="left:582.9px;width:20px;text-align:center;top:337.53px;font-size:14.5px;line-height:14.5px;color:#fff;">A</div>
<div class="t" style="left:609.48px;top:337.94px;font-size:14.6px;line-height:14.6px;color:#000;">m</div>
<div class="t" style="right:1469.6px;top:366.94px;font-size:14.6px;line-height:14.6px;color:#000;">Deckenstärke</div>
<div class="a" style="left:511px;top:360.8px;width:95px;height:26.6px;background:#fff;border:1px solid #e2e2e2;border-bottom:1px solid #8a8a8a;border-radius:2px;"></div>
<div class="t" style="right:1396.5px;top:366.94px;font-size:14.6px;line-height:14.6px;color:#777;">0,24</div>
<div class="a" style="left:583.8px;top:362.8px;width:21px;height:23.2px;background:#cfe6fa;border:1px solid #a8d3f5;border-radius:3px;"></div><div class="a" style="left:585.0px;top:366.40000000000003px;width:15.8px;height:15.2px;background:#a6cf3a;"></div><div class="t" style="left:582.9px;width:20px;text-align:center;top:367.53px;font-size:14.5px;line-height:14.5px;color:#fff;">A</div>
<div class="t" style="left:609.48px;top:367.94px;font-size:14.6px;line-height:14.6px;color:#000;">m</div>
<div class="t" style="left:669.98px;top:308.24px;font-size:14.6px;line-height:14.6px;color:#000;">Vollgeschoss: ja</div>
<div class="a" style="left:511.3px;top:395.3px;width:15.2px;height:15.2px;background:#f3f3f3;border:1px solid #6e6e6e;border-radius:3px;"></div>
<div class="t" style="left:530.68px;top:397.24px;font-size:14.6px;line-height:14.6px;color:#000;">Erdgeschoss</div>
<div class="t" style="left:358.58px;top:430.44px;font-size:14.6px;line-height:14.6px;color:#000;">Volltextsuche</div>
<div class="a" style="left:450.8px;top:424px;width:1242.5px;height:27px;background:#fff;border:1px solid #ececec;border-bottom:1px solid #7a7a7a;border-radius:2px;"></div>
<div class="a" style="left:361px;top:459px;width:1333px;height:646px;background:#fff;"></div>
<div class="a" style="left:398.5px;top:459px;width:1px;height:26px;background:#e8e8e8;"></div>
<div class="a" style="left:498.3px;top:459px;width:1px;height:26px;background:#e8e8e8;"></div>
<div class="a" style="left:686.3px;top:459px;width:1px;height:26px;background:#e8e8e8;"></div>
<div class="a" style="left:774.5px;top:459px;width:1px;height:26px;background:#e8e8e8;"></div>
<div class="a" style="left:862.3px;top:459px;width:1px;height:26px;background:#e8e8e8;"></div>
<div class="a" style="left:950.5px;top:459px;width:1px;height:26px;background:#e8e8e8;"></div>
<div class="a" style="left:1139px;top:459px;width:1px;height:26px;background:#e8e8e8;"></div>
<div class="a" style="left:1227px;top:459px;width:1px;height:26px;background:#e8e8e8;"></div>
<div class="a" style="left:1352px;top:459px;width:1px;height:26px;background:#e8e8e8;"></div>
<div class="a" style="left:1439.5px;top:459px;width:1px;height:26px;background:#e8e8e8;"></div>
<div class="a" style="left:1527px;top:459px;width:1px;height:26px;background:#e8e8e8;"></div>
<div class="t" style="left:366.18px;top:466.14px;font-size:14.6px;line-height:14.6px;color:#000;">ID</div>
<div class="t" style="left:403.98px;top:466.14px;font-size:14.6px;line-height:14.6px;color:#000;">Nr</div>
<div class="t" style="left:503.98px;top:466.14px;font-size:14.6px;line-height:14.6px;color:#000;">Name</div>
<div class="t" style="right:1207.6px;top:466.14px;font-size:14.6px;line-height:14.6px;color:#000;">NGF</div>
<div class="t" style="left:780.98px;top:466.14px;font-size:14.6px;line-height:14.6px;color:#000;">Luftvolum...</div>
<div class="t" style="left:868.38px;top:466.14px;font-size:14.6px;line-height:14.6px;color:#000;">lichte Höhe</div>
<div class="t" style="left:955.98px;top:466.14px;font-size:14.6px;line-height:14.6px;color:#000;">Zone</div>
<div class="t" style="right:755px;top:466.14px;font-size:14.6px;line-height:14.6px;color:#000;">Geschoss</div>
<div class="t" style="left:1231.98px;top:466.14px;font-size:14.6px;line-height:14.6px;color:#000;">Nutzungseinheit</div>
<div class="t" style="right:543px;top:466.14px;font-size:14.6px;line-height:14.6px;color:#000;">BGF</div>
<div class="t" style="right:454px;top:466.14px;font-size:14.6px;line-height:14.6px;color:#000;">BRI</div>
<div class="a" style="left:372.4px;top:488.5px;width:1311.4px;height:18px;display:flex;align-items:center;font-size:15.1px;color:#32419a;white-space:nowrap"><span style="position:relative;top:-0.5px">Wohnung OG</span><div style="flex:1;height:1px;background:#a8bce0;margin-left:6px"></div></div>
<div class="t" style="left:366.18px;top:516.84px;font-size:14.6px;line-height:14.6px;color:#000;">1</div>
<div class="t" style="left:403.98px;top:516.84px;font-size:14.6px;line-height:14.6px;color:#000;">OG-R7</div>
<div class="t" style="left:503.98px;top:516.84px;font-size:14.6px;line-height:14.6px;color:#000;">OG-R7 Flur</div>
<div class="t" style="right:1209px;top:516.84px;font-size:14.6px;line-height:14.6px;color:#000;">16,3</div>
<div class="t" style="right:1121px;top:516.84px;font-size:14.6px;line-height:14.6px;color:#000;">41,6</div>
<div class="t" style="right:1033px;top:516.84px;font-size:14.6px;line-height:14.6px;color:#000;">2,55</div>
<div class="t" style="left:955.98px;top:516.84px;font-size:14.6px;line-height:14.6px;color:#000;">Wohnen</div>
<div class="t" style="right:757px;top:516.84px;font-size:14.6px;line-height:14.6px;color:#000;">1</div>
<div class="t" style="left:1231.98px;top:516.84px;font-size:14.6px;line-height:14.6px;color:#000;">Wohnung OG</div>
<div class="t" style="right:544px;top:516.84px;font-size:14.6px;line-height:14.6px;color:#000;">18,0</div>
<div class="t" style="right:456px;top:516.84px;font-size:14.6px;line-height:14.6px;color:#000;">50,1</div>
<div class="t" style="left:366.18px;top:541.84px;font-size:14.6px;line-height:14.6px;color:#000;">3</div>
<div class="t" style="left:403.98px;top:541.84px;font-size:14.6px;line-height:14.6px;color:#000;">OG-R1</div>
<div class="t" style="left:503.98px;top:541.84px;font-size:14.6px;line-height:14.6px;color:#000;">OG-R1 Wohnzimmer</div>
<div class="t" style="right:1209px;top:541.84px;font-size:14.6px;line-height:14.6px;color:#000;">51,6</div>
<div class="t" style="right:1121px;top:541.84px;font-size:14.6px;line-height:14.6px;color:#000;">131,6</div>
<div class="t" style="right:1033px;top:541.84px;font-size:14.6px;line-height:14.6px;color:#000;">2,55</div>
<div class="t" style="left:955.98px;top:541.84px;font-size:14.6px;line-height:14.6px;color:#000;">Wohnen</div>
<div class="t" style="right:757px;top:541.84px;font-size:14.6px;line-height:14.6px;color:#000;">1</div>
<div class="t" style="left:1231.98px;top:541.84px;font-size:14.6px;line-height:14.6px;color:#000;">Wohnung OG</div>
<div class="t" style="right:544px;top:541.84px;font-size:14.6px;line-height:14.6px;color:#000;">56,7</div>
<div class="t" style="right:456px;top:541.84px;font-size:14.6px;line-height:14.6px;color:#000;">158,3</div>
<div class="t" style="left:366.18px;top:566.84px;font-size:14.6px;line-height:14.6px;color:#000;">4</div>
<div class="t" style="left:403.98px;top:566.84px;font-size:14.6px;line-height:14.6px;color:#000;">OG-R2</div>
<div class="t" style="left:503.98px;top:566.84px;font-size:14.6px;line-height:14.6px;color:#000;">OG-R2 Schlafzimmer</div>
<div class="t" style="right:1209px;top:566.84px;font-size:14.6px;line-height:14.6px;color:#000;">18,9</div>
<div class="t" style="right:1121px;top:566.84px;font-size:14.6px;line-height:14.6px;color:#000;">48,1</div>
<div class="t" style="right:1033px;top:566.84px;font-size:14.6px;line-height:14.6px;color:#000;">2,55</div>
<div class="t" style="left:955.98px;top:566.84px;font-size:14.6px;line-height:14.6px;color:#000;">Wohnen</div>
<div class="t" style="right:757px;top:566.84px;font-size:14.6px;line-height:14.6px;color:#000;">1</div>
<div class="t" style="left:1231.98px;top:566.84px;font-size:14.6px;line-height:14.6px;color:#000;">Wohnung OG</div>
<div class="t" style="right:544px;top:566.84px;font-size:14.6px;line-height:14.6px;color:#000;">20,7</div>
<div class="t" style="right:456px;top:566.84px;font-size:14.6px;line-height:14.6px;color:#000;">57,9</div>
<div class="t" style="left:366.18px;top:591.84px;font-size:14.6px;line-height:14.6px;color:#000;">5</div>
<div class="t" style="left:403.98px;top:591.84px;font-size:14.6px;line-height:14.6px;color:#000;">OG-R6</div>
<div class="t" style="left:503.98px;top:591.84px;font-size:14.6px;line-height:14.6px;color:#000;">OG-R6 Küche</div>
<div class="t" style="right:1209px;top:591.84px;font-size:14.6px;line-height:14.6px;color:#000;">18,7</div>
<div class="t" style="right:1121px;top:591.84px;font-size:14.6px;line-height:14.6px;color:#000;">47,7</div>
<div class="t" style="right:1033px;top:591.84px;font-size:14.6px;line-height:14.6px;color:#000;">2,55</div>
<div class="t" style="left:955.98px;top:591.84px;font-size:14.6px;line-height:14.6px;color:#000;">Wohnen</div>
<div class="t" style="right:757px;top:591.84px;font-size:14.6px;line-height:14.6px;color:#000;">1</div>
<div class="t" style="left:1231.98px;top:591.84px;font-size:14.6px;line-height:14.6px;color:#000;">Wohnung OG</div>
<div class="t" style="right:544px;top:591.84px;font-size:14.6px;line-height:14.6px;color:#000;">20,6</div>
<div class="t" style="right:456px;top:591.84px;font-size:14.6px;line-height:14.6px;color:#000;">57,4</div>
<div class="t" style="left:366.18px;top:616.84px;font-size:14.6px;line-height:14.6px;color:#000;">8</div>
<div class="t" style="left:403.98px;top:616.84px;font-size:14.6px;line-height:14.6px;color:#000;">OG-R4</div>
<div class="t" style="left:503.98px;top:616.84px;font-size:14.6px;line-height:14.6px;color:#000;">OG-R4 Bad</div>
<div class="t" style="right:1209px;top:616.84px;font-size:14.6px;line-height:14.6px;color:#000;">7,3</div>
<div class="t" style="right:1121px;top:616.84px;font-size:14.6px;line-height:14.6px;color:#000;">18,6</div>
<div class="t" style="right:1033px;top:616.84px;font-size:14.6px;line-height:14.6px;color:#000;">2,55</div>
<div class="t" style="left:955.98px;top:616.84px;font-size:14.6px;line-height:14.6px;color:#000;">Wohnen</div>
<div class="t" style="right:757px;top:616.84px;font-size:14.6px;line-height:14.6px;color:#000;">1</div>
<div class="t" style="left:1231.98px;top:616.84px;font-size:14.6px;line-height:14.6px;color:#000;">Wohnung OG</div>
<div class="t" style="right:544px;top:616.84px;font-size:14.6px;line-height:14.6px;color:#000;">8,0</div>
<div class="t" style="right:456px;top:616.84px;font-size:14.6px;line-height:14.6px;color:#000;">22,4</div>
<div class="t" style="left:366.18px;top:641.84px;font-size:14.6px;line-height:14.6px;color:#000;">10</div>
<div class="t" style="left:403.98px;top:641.84px;font-size:14.6px;line-height:14.6px;color:#000;">OG-R5</div>
<div class="t" style="left:503.98px;top:641.84px;font-size:14.6px;line-height:14.6px;color:#000;">OG-R5 WC</div>
<div class="t" style="right:1209px;top:641.84px;font-size:14.6px;line-height:14.6px;color:#000;">2,5</div>
<div class="t" style="right:1121px;top:641.84px;font-size:14.6px;line-height:14.6px;color:#000;">6,3</div>
<div class="t" style="right:1033px;top:641.84px;font-size:14.6px;line-height:14.6px;color:#000;">2,55</div>
<div class="t" style="left:955.98px;top:641.84px;font-size:14.6px;line-height:14.6px;color:#000;">Wohnen</div>
<div class="t" style="right:757px;top:641.84px;font-size:14.6px;line-height:14.6px;color:#000;">1</div>
<div class="t" style="left:1231.98px;top:641.84px;font-size:14.6px;line-height:14.6px;color:#000;">Wohnung OG</div>
<div class="t" style="right:544px;top:641.84px;font-size:14.6px;line-height:14.6px;color:#000;">2,7</div>
<div class="t" style="right:456px;top:641.84px;font-size:14.6px;line-height:14.6px;color:#000;">7,6</div>
<div class="t" style="left:366.18px;top:666.84px;font-size:14.6px;line-height:14.6px;color:#000;">17</div>
<div class="t" style="left:403.98px;top:666.84px;font-size:14.6px;line-height:14.6px;color:#000;">OG-R3</div>
<div class="t" style="left:503.98px;top:666.84px;font-size:14.6px;line-height:14.6px;color:#000;">OG-R3 Kinderzimmer</div>
<div class="t" style="right:1209px;top:666.84px;font-size:14.6px;line-height:14.6px;color:#000;">10,1</div>
<div class="t" style="right:1121px;top:666.84px;font-size:14.6px;line-height:14.6px;color:#000;">25,6</div>
<div class="t" style="right:1033px;top:666.84px;font-size:14.6px;line-height:14.6px;color:#000;">2,55</div>
<div class="t" style="left:955.98px;top:666.84px;font-size:14.6px;line-height:14.6px;color:#000;">Wohnen</div>
<div class="t" style="right:757px;top:666.84px;font-size:14.6px;line-height:14.6px;color:#000;">1</div>
<div class="t" style="left:1231.98px;top:666.84px;font-size:14.6px;line-height:14.6px;color:#000;">Wohnung OG</div>
<div class="t" style="right:544px;top:666.84px;font-size:14.6px;line-height:14.6px;color:#000;">11,1</div>
<div class="t" style="right:456px;top:666.84px;font-size:14.6px;line-height:14.6px;color:#000;">30,9</div>
<div class="a" style="left:372.4px;top:692.5px;width:1311.4px;height:18px;display:flex;align-items:center;font-size:15.1px;color:#32419a;white-space:nowrap"><span style="position:relative;top:-0.5px">Wohnung OG-Summe/Mittelwert</span><div style="flex:1;height:1px;background:#a8bce0;margin-left:6px"></div></div>
<div class="t" style="right:1209px;top:720.84px;font-size:14.6px;line-height:14.6px;color:#000;">125,3</div>
<div class="t" style="right:1121px;top:720.84px;font-size:14.6px;line-height:14.6px;color:#000;">319,5</div>
<div class="t" style="right:1033px;top:720.84px;font-size:14.6px;line-height:14.6px;color:#000;">2,55</div>
<div class="t" style="right:544px;top:720.84px;font-size:14.6px;line-height:14.6px;color:#000;">137,8</div>
<div class="t" style="right:456px;top:720.84px;font-size:14.6px;line-height:14.6px;color:#000;">384,5</div>
<div class="a" style="left:372.4px;top:746.5px;width:1311.4px;height:18px;display:flex;align-items:center;font-size:15.1px;color:#32419a;white-space:nowrap"><span style="position:relative;top:-0.5px">Ohne Nutzungseinheit</span><div style="flex:1;height:1px;background:#a8bce0;margin-left:6px"></div></div>
<div class="t" style="left:366.18px;top:774.84px;font-size:14.6px;line-height:14.6px;color:#000;">21</div>
<div class="t" style="left:403.98px;top:774.84px;font-size:14.6px;line-height:14.6px;color:#000;">OG-R8</div>
<div class="t" style="left:503.98px;top:774.84px;font-size:14.6px;line-height:14.6px;color:#000;">OG-R8 Treppenraum</div>
<div class="t" style="right:1209px;top:774.84px;font-size:14.6px;line-height:14.6px;color:#000;">11,4</div>
<div class="t" style="right:1121px;top:774.84px;font-size:14.6px;line-height:14.6px;color:#000;">29,0</div>
<div class="t" style="right:1033px;top:774.84px;font-size:14.6px;line-height:14.6px;color:#000;">2,55</div>
<div class="t" style="left:955.98px;top:774.84px;font-size:14.6px;line-height:14.6px;color:#000;">Wohnen</div>
<div class="t" style="right:757px;top:774.84px;font-size:14.6px;line-height:14.6px;color:#000;">1</div>
<div class="t" style="right:544px;top:774.84px;font-size:14.6px;line-height:14.6px;color:#000;">12,5</div>
<div class="t" style="right:456px;top:774.84px;font-size:14.6px;line-height:14.6px;color:#000;">34,9</div>
<div class="a" style="left:372.4px;top:800.5px;width:1311.4px;height:18px;display:flex;align-items:center;font-size:15.1px;color:#32419a;white-space:nowrap"><span style="position:relative;top:-0.5px">Ohne Nutzungseinheit-Summe/Mittelwert</span><div style="flex:1;height:1px;background:#a8bce0;margin-left:6px"></div></div>
<div class="t" style="right:1209px;top:828.84px;font-size:14.6px;line-height:14.6px;color:#000;">11,4</div>
<div class="t" style="right:1121px;top:828.84px;font-size:14.6px;line-height:14.6px;color:#000;">29,0</div>
<div class="t" style="right:1033px;top:828.84px;font-size:14.6px;line-height:14.6px;color:#000;">2,55</div>
<div class="t" style="right:544px;top:828.84px;font-size:14.6px;line-height:14.6px;color:#000;">12,5</div>
<div class="t" style="right:456px;top:828.84px;font-size:14.6px;line-height:14.6px;color:#000;">34,9</div>
<div class="a" style="left:372.4px;top:854.5px;width:1311.4px;height:18px;display:flex;align-items:center;font-size:15.1px;color:#32419a;white-space:nowrap"><span style="position:relative;top:-0.5px">1. Obergeschoss-Summe/Mittelwert</span><div style="flex:1;height:1px;background:#a8bce0;margin-left:6px"></div></div>
<div class="t" style="right:1209px;top:882.84px;font-size:14.6px;line-height:14.6px;color:#000;">136,7</div>
<div class="t" style="right:1121px;top:882.84px;font-size:14.6px;line-height:14.6px;color:#000;">348,5</div>
<div class="t" style="right:1033px;top:882.84px;font-size:14.6px;line-height:14.6px;color:#000;">2,55</div>
<div class="t" style="right:544px;top:882.84px;font-size:14.6px;line-height:14.6px;color:#000;">150,3</div>
<div class="t" style="right:456px;top:882.84px;font-size:14.6px;line-height:14.6px;color:#000;">419,4</div>
<svg style="left:0;top:0" width="1976" height="1110"><defs><filter id="bl"><feGaussianBlur stdDeviation="1.2"/></filter></defs><line x1="445" y1="157.5" x2="410.5" y2="216.5" stroke="rgba(0,0,0,0.25)" stroke-width="3.5" filter="url(#bl)"/><line x1="570.3" y1="155.8" x2="625" y2="207.4" stroke="rgba(0,0,0,0.25)" stroke-width="3.5" filter="url(#bl)"/><line x1="678" y1="153" x2="808.5" y2="209.5" stroke="rgba(0,0,0,0.25)" stroke-width="3.5" filter="url(#bl)"/><line x1="442" y1="154.5" x2="407.5" y2="213.5" stroke="#ff0000" stroke-width="2"/><line x1="567.3" y1="152.8" x2="622" y2="204.4" stroke="#ff0000" stroke-width="2"/><line x1="675" y1="150" x2="805.5" y2="206.5" stroke="#ff0000" stroke-width="2"/></svg>
<div class="a" style="left:357px;top:104px;width:158px;height:51px;background:transparent;border:4px solid #ff0000;"></div>
<div class="a" style="left:525px;top:104px;width:92px;height:49px;background:transparent;border:4px solid #ff0000;"></div>
<div class="a" style="left:624px;top:106px;width:52px;height:47px;background:transparent;border:4px solid #ff0000;"></div>
<div class="a" style="left:272px;top:213px;width:232px;height:82.3px;background:#fff;border:2px solid #ff0000;"></div><div class="t" style="left:272.0px;width:232px;text-align:center;top:235.56px;font-size:16px;line-height:16px;color:#ff0000;font-weight:bold;letter-spacing:0.7px;">Geschoss</div><div class="t" style="left:272.0px;width:232px;text-align:center;top:256.66px;font-size:16px;line-height:16px;color:#ff0000;font-weight:bold;letter-spacing:0.7px;">anlegen/löschen/kopieren</div>
<div class="a" style="left:531px;top:203px;width:188px;height:98px;background:#fff;border:2px solid #ff0000;"></div><div class="t" style="left:531.0px;width:188px;text-align:center;top:225.36px;font-size:16px;line-height:16px;color:#ff0000;font-weight:bold;letter-spacing:0.7px;">Geschoss nach</div><div class="t" style="left:531.0px;width:188px;text-align:center;top:244.66px;font-size:16px;line-height:16px;color:#ff0000;font-weight:bold;letter-spacing:0.7px;">unten/oben</div><div class="t" style="left:531.0px;width:188px;text-align:center;top:264.06px;font-size:16px;line-height:16px;color:#ff0000;font-weight:bold;letter-spacing:0.7px;">verschieben</div>
<div class="a" style="left:806px;top:201px;width:207px;height:62px;background:#fff;border:2px solid #ff0000;"></div><div class="t" style="left:806.0px;width:207px;text-align:center;top:225.36px;font-size:16px;line-height:16px;color:#ff0000;font-weight:bold;letter-spacing:0.7px;">neuen Raum anlegen</div>
<div class="a" style="left:1698px;top:106px;width:278px;height:1004px;background:#f0f0f0;"></div>
<div class="a" style="left:1702px;top:106px;width:245.5px;height:26px;background:#fcfcfc;border-right:1px solid #e8e8e8;"></div>
<div class="t" style="left:1705.28px;top:113.64px;font-size:14.6px;line-height:14.6px;color:#000;">Ist-Zustand</div>
<svg style="left:1932.5px;top:117.5px;" width="10" height="6" viewBox="0 0 10 6"><path d="M0.5,0.5 L5,5 L9.5,0.5" fill="none" stroke="#444" stroke-width="1.1"/></svg>
<div class="a" style="left:1949px;top:109px;width:21.5px;height:21.5px;background:#d8ebfa;border:2px solid #0b5fb0;border-radius:4px;"></div>
<div class="a" style="left:1952px;top:112px;width:16px;height:16px;background:#a8d133;"></div>
<div class="t" style="left:1950.0px;width:20px;text-align:center;top:112.61px;font-size:17px;line-height:17px;color:#fff;">A</div>
<div class="a" style="left:1702px;top:132px;width:256px;height:950px;background:#7f7f7f;"></div>
<div class="a" style="left:1958px;top:132px;width:18px;height:950px;background:#fafafa;"></div>
<svg style="left:1961px;top:138px;" width="13" height="10" viewBox="0 0 13 10"><path d="M1.5,8.5 L6.5,1.5 L11.5,8.5 Z" fill="#8a8a8a" stroke="#8a8a8a" stroke-width="2" stroke-linejoin="round"/></svg>
<div class="a" style="left:1962px;top:155px;width:11px;height:842px;background:#8a8a8a;border-radius:5.5px;"></div>
<svg style="left:1961px;top:1067px;" width="13" height="10" viewBox="0 0 13 10"><path d="M1.5,1.5 L6.5,8.5 L11.5,1.5 Z" fill="#8a8a8a" stroke="#8a8a8a" stroke-width="2" stroke-linejoin="round"/></svg>
<div class="a" style="left:1705px;top:135px;width:250px;height:416.5px;background:#fff;"></div>
<div class="a" style="left:1705px;top:557px;width:250px;height:128px;background:#fff;"></div>
<div class="a" style="left:1705px;top:690.5px;width:250px;height:87.0px;background:#fff;"></div>
<div class="a" style="left:1705px;top:782.5px;width:250px;height:102.0px;background:#fff;"></div>
<div class="a" style="left:1705px;top:889.5px;width:250px;height:122.5px;background:#fff;"></div>
<div class="a" style="left:1705px;top:1017px;width:250px;height:65px;background:#fff;"></div>
<div class="t" style="left:1713.77px;top:146.16px;font-size:21.9px;line-height:21.9px;color:#222a33;">GEG 2024</div>
<div class="t" style="left:1714.14px;top:171.05px;font-size:16.6px;line-height:16.6px;color:#222a33;">DIN V 18599</div>
<svg style="left:1914px;top:148px;" width="24" height="24" viewBox="0 0 24 24"><circle cx="12" cy="12" r="10.8" fill="#b52121" stroke="#8a3a30" stroke-width="0.6"/></svg>
<div class="a" style="left:1721.6px;top:195px;width:212.6px;height:165px;background:#fff;box-shadow:1px 2px 2px rgba(0,0,0,0.35);"></div><div class="a" style="left:1721.6px;top:195px;width:17.5px;height:165px;background:#d3d3d3;"></div><div class="t" style="left:1690.35px;top:270.5px;width:80px;height:14px;text-align:center;font-size:11px;line-height:14px;color:#222;transform:rotate(-90deg);">Effizienzklasse</div><div class="a" style="left:1744px;top:195px;width:190px;height:165px;background:#b52024;"></div><div class="t" style="left:1739.8px;width:200px;text-align:center;top:200.60px;font-size:157px;line-height:157px;color:#fff;">H</div><div class="t" style="left:1793px;top:338.0px;font-size:16.5px;line-height:16.5px;color:#fff;"><b>372,5</b> kWh/(m²a)</div>
<div class="a" style="left:1722.3px;top:369px;width:211.9px;height:61.3px;background:#fff;box-shadow:1px 2px 2px rgba(0,0,0,0.35);"></div><div class="a" style="left:1722.3px;top:369px;width:17.5px;height:61.3px;background:#d3d3d3;"></div><div class="t" style="left:1691.05px;top:392.65px;width:80px;height:14px;text-align:center;font-size:11px;line-height:14px;color:#222;transform:rotate(-90deg);">Q<sub style="font-size:8px">P</sub></div><div class="a" style="left:1744.2px;top:369.0px;width:113.6px;height:20.5px;background:#d3d3d3;"></div><div class="t" style="left:1748.83px;top:374.19px;font-size:11px;line-height:11px;color:#111;">78,0 kWh/(m²a)</div><div class="a" style="left:1744.2px;top:389.5px;width:159.5px;height:20.5px;background:#4186b9;"></div><div class="t" style="left:1748.83px;top:394.69px;font-size:11px;line-height:11px;color:#111;">109,1 kWh/(m²a)</div><div class="a" style="left:1744.2px;top:410.0px;width:190px;height:20.5px;background:linear-gradient(90deg,#4e9a16 0%,#b2d636 22%,#fdd62e 45%,#f0a134 65%,#d2502a 88%,#b91f22 100%);"></div><div class="t" style="left:1748.83px;top:415.19px;font-size:11px;line-height:11px;color:#111;">413,9 kWh/(m²a)</div>
<div class="a" style="left:1722.3px;top:439px;width:211.9px;height:62.2px;background:#fff;box-shadow:1px 2px 2px rgba(0,0,0,0.35);"></div><div class="a" style="left:1722.3px;top:439px;width:17.5px;height:62.2px;background:#d3d3d3;"></div><div class="t" style="left:1691.05px;top:463.1px;width:80px;height:14px;text-align:center;font-size:11px;line-height:14px;color:#222;transform:rotate(-90deg);">H<sub style="font-size:8px">T</sub></div><div class="a" style="left:1744.2px;top:439.0px;width:96.5px;height:20.7px;background:#d3d3d3;"></div><div class="t" style="left:1748.83px;top:444.19px;font-size:11px;line-height:11px;color:#111;">0,40 W/(m²K)</div><div class="a" style="left:1744.2px;top:459.7px;width:171.5px;height:20.7px;background:#4186b9;"></div><div class="t" style="left:1748.83px;top:464.89px;font-size:11px;line-height:11px;color:#111;">0,70 W/(m²K)</div><div class="a" style="left:1744.2px;top:480.4px;width:190px;height:20.7px;background:linear-gradient(90deg,#4e9a16 0%,#b2d636 22%,#fdd62e 45%,#f0a134 65%,#d2502a 88%,#b91f22 100%);"></div><div class="t" style="left:1748.83px;top:485.59px;font-size:11px;line-height:11px;color:#111;">1,16 W/(m²K)</div>
<div class="a" style="left:1722.3px;top:509px;width:211.9px;height:22px;background:#fff;box-shadow:1px 2px 2px rgba(0,0,0,0.35);"></div><div class="a" style="left:1722.3px;top:509px;width:17.5px;height:22px;background:#d3d3d3;"></div><div class="t" style="left:1691.05px;top:513.0px;width:80px;height:14px;text-align:center;font-size:11px;line-height:14px;color:#222;transform:rotate(-90deg);">EH</div><div class="a" style="left:1744.2px;top:509px;width:40.799999999999955px;height:22px;background:#b52024;"></div><div class="t" style="right:190.5px;top:514.77px;font-size:11.5px;line-height:11.5px;color:#fff;font-weight:bold;">40</div><div class="a" style="left:1788px;top:509px;width:15.5px;height:22px;background:#b52024;"></div><div class="t" style="right:172.0px;top:514.77px;font-size:11.5px;line-height:11.5px;color:#fff;font-weight:bold;">55</div><div class="a" style="left:1806px;top:509px;width:16px;height:22px;background:#b52024;"></div><div class="t" style="right:153.5px;top:514.77px;font-size:11.5px;line-height:11.5px;color:#fff;font-weight:bold;">70</div><div class="a" style="left:1825px;top:509px;width:15px;height:22px;background:#b52024;"></div><div class="t" style="right:135.5px;top:514.77px;font-size:11.5px;line-height:11.5px;color:#fff;font-weight:bold;">85</div><div class="a" style="left:1843px;top:509px;width:88px;height:22px;background:#b52024;"></div><div class="t" style="right:44.5px;top:514.77px;font-size:11.5px;line-height:11.5px;color:#fff;font-weight:bold;">160</div>
<div class="t" style="left:1713.75px;top:567.99px;font-size:22.1px;line-height:22.1px;color:#222a33;">Erneuerbare</div>
<div class="t" style="left:1713.75px;top:593.99px;font-size:22.1px;line-height:22.1px;color:#222a33;">Energien</div>
<svg style="left:1914px;top:570px;" width="24" height="24" viewBox="0 0 24 24"><circle cx="12" cy="12" r="10.6" fill="#fff" stroke="#222" stroke-width="1.3"/></svg>
<div class="a" style="left:1721.8px;top:623.7px;width:213px;height:41px;background:#fff;box-shadow:1px 2px 2px rgba(0,0,0,0.35);"></div><div class="a" style="left:1721.8px;top:623.7px;width:17.5px;height:41px;background:#d3d3d3;"></div><div class="t" style="left:1690.55px;top:637.2px;width:80px;height:14px;text-align:center;font-size:11px;line-height:14px;color:#222;transform:rotate(-90deg);">EE</div><div class="a" style="left:1743.8px;top:623.7px;width:123.6px;height:20px;background:#d3d3d3;"></div><div class="t" style="left:1748.53px;top:628.69px;font-size:11px;line-height:11px;color:#111;">65 %</div><div class="t" style="left:1748.53px;top:648.69px;font-size:11px;line-height:11px;color:#111;">0 %</div>
<div class="t" style="left:1713.75px;top:701.99px;font-size:22.1px;line-height:22.1px;color:#222a33;">Sommerlicher</div>
<div class="t" style="left:1713.75px;top:728.89px;font-size:22.1px;line-height:22.1px;color:#222a33;">Wärmeschutz</div>
<div class="t" style="left:1714.14px;top:754.65px;font-size:16.6px;line-height:16.6px;color:#222a33;">DIN 4108-2</div>
<svg style="left:1914px;top:703.5px;" width="24" height="24" viewBox="0 0 24 24"><circle cx="12" cy="12" r="10.6" fill="#fff" stroke="#222" stroke-width="1.3"/></svg>
<div class="t" style="left:1713.75px;top:793.69px;font-size:22.1px;line-height:22.1px;color:#222a33;">Heizlast</div>
<div class="t" style="left:1714.14px;top:820.15px;font-size:16.6px;line-height:16.6px;color:#222a33;">DIN 12831</div>
<div class="a" style="left:1721.8px;top:843.8px;width:212.5px;height:20px;background:#fff;box-shadow:1px 2px 2px rgba(0,0,0,0.35);"></div><div class="a" style="left:1721.8px;top:843.8px;width:17.5px;height:20px;background:#d3d3d3;"></div><div class="t" style="left:1690.55px;top:846.8px;width:80px;height:14px;text-align:center;font-size:11px;line-height:14px;color:#222;transform:rotate(-90deg);"><span style="display:inline-block;transform:rotate(90deg)">⊖</span></div><div class="t" style="left:1748.53px;top:848.49px;font-size:11px;line-height:11px;color:#111;">40,4 kW</div>
<div class="t" style="left:1713.75px;top:900.99px;font-size:22.1px;line-height:22.1px;color:#222a33;">Lüftungskonzept</div>
<div class="t" style="left:1714.14px;top:927.15px;font-size:16.6px;line-height:16.6px;color:#222a33;">DIN 1946-6</div>
<svg style="left:1914px;top:903.5px;" width="24" height="24" viewBox="0 0 24 24"><circle cx="12" cy="12" r="11" fill="#7fb01e"/></svg>
<div class="a" style="left:1722px;top:951px;width:212.6px;height:41.5px;background:#fff;box-shadow:1px 2px 2px rgba(0,0,0,0.35);"></div><div class="a" style="left:1722px;top:951px;width:17.5px;height:41.5px;background:#d3d3d3;"></div><div class="t" style="left:1690.75px;top:964.75px;width:80px;height:14px;text-align:center;font-size:11px;line-height:14px;color:#222;transform:rotate(-90deg);">inf min</div><div class="a" style="left:1744.3px;top:951px;width:94.5px;height:20px;background:#d3d3d3;"></div><div class="a" style="left:1744.3px;top:971px;width:36.3px;height:21px;background:linear-gradient(90deg,#3c7fb6,#5b9ccc);"></div><div class="t" style="left:1748.73px;top:956.19px;font-size:11px;line-height:11px;color:#111;">51 m³/h</div><div class="t" style="left:1748.73px;top:976.69px;font-size:11px;line-height:11px;color:#111;">20 m³/h</div>
<div class="t" style="left:1713.75px;top:1028.79px;font-size:22.1px;line-height:22.1px;color:#222a33;">Beratung</div>
<div class="t" style="left:1714.14px;top:1054.25px;font-size:16.6px;line-height:16.6px;color:#222a33;">DIN V 18599</div>
<div class="a" style="left:1722px;top:1076.5px;width:17.5px;height:6px;background:#d3d3d3;"></div>
<div class="a" style="left:1744.3px;top:1077px;width:190px;height:5px;background:linear-gradient(90deg,#4e9a16 0%,#b2d636 22%,#fdd62e 45%,#f0a134 65%,#d2502a 88%,#b91f22 100%);"></div>
<div class="a" style="left:1698px;top:1082px;width:278px;height:28px;background:#f0f0f0;"></div></body></html>
